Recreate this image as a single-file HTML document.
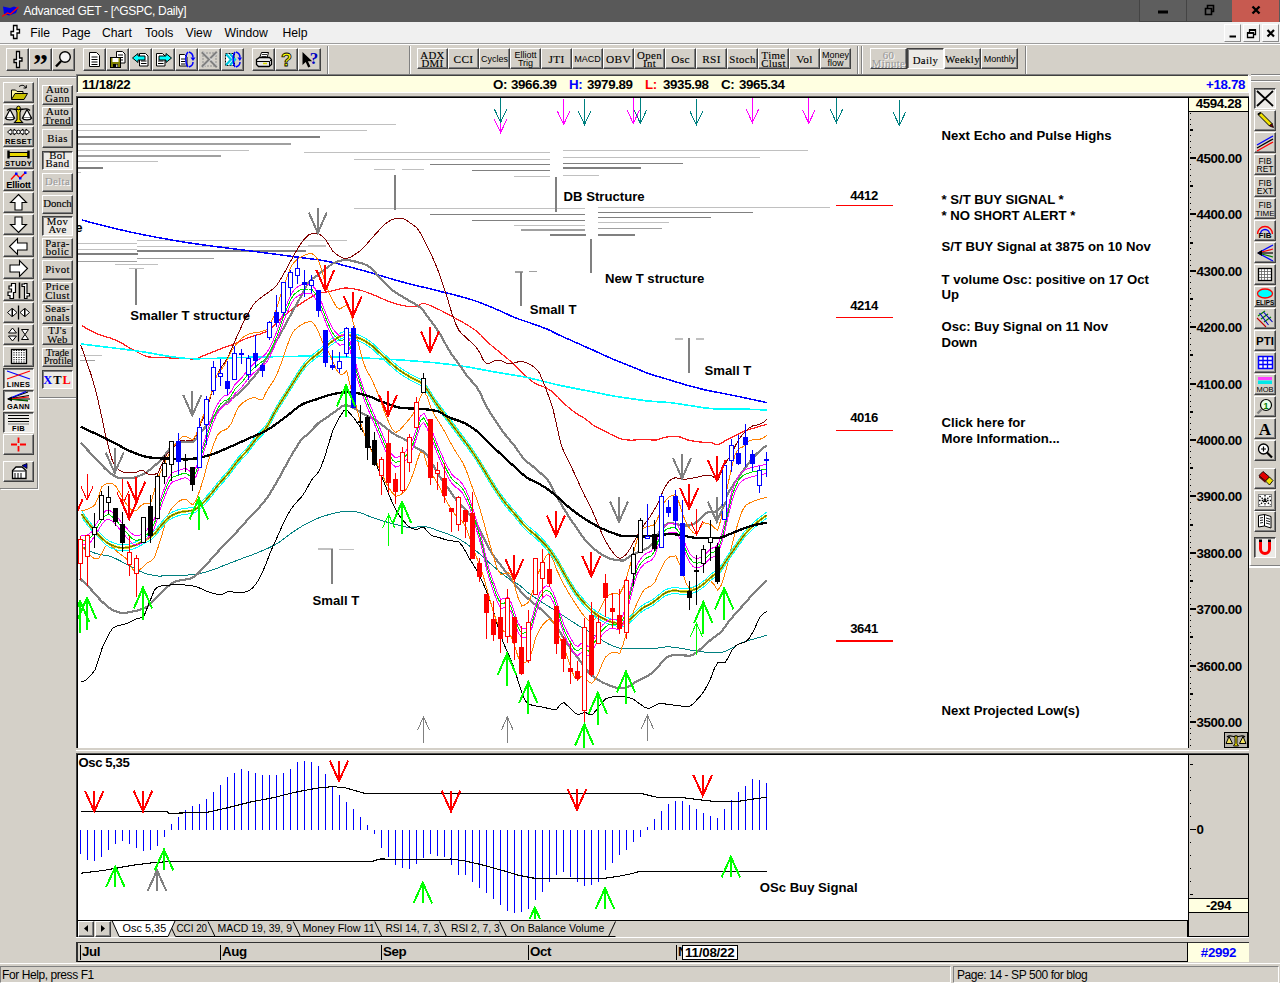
<!DOCTYPE html>
<html><head><meta charset="utf-8"><title>Advanced GET - [^GSPC, Daily]</title>
<style>

*{box-sizing:border-box;margin:0;padding:0}
html,body{width:1280px;height:983px;overflow:hidden;background:#d4d0c8}
body{position:relative;font-family:"Liberation Sans",Arial,sans-serif;font-size:12px;color:#000}
.abs{position:absolute}
.chartsvg{position:absolute;left:0;top:0;pointer-events:none}
#title{left:0;top:0;width:1280px;height:22.500px;background:#595959;color:#fff}
#title .t{position:absolute;left:23.5px;top:4px;font-size:12px;white-space:nowrap;letter-spacing:-0.3px}
.wb{position:absolute;top:0;height:22px;width:46px;background:#5e5e5e;border:1px solid #444;border-top:none}
#menu{left:0;top:22px;width:1280px;height:21px;background:#f0f0f0}
#menu span{position:absolute;top:3.5px;font-size:12.2px}
.mdi{position:absolute;top:24px;width:17.500px;height:17.500px;background:#f2f2f2;border:1px solid;border-color:#fff #8a8a8a #8a8a8a #fff}
#tbar{left:0;top:43px;width:1280px;height:33px;background:#d4d0c8;border-top:1px solid #9d9d9d;box-shadow:inset 0 1px 0 #fff}
.btn{position:absolute;background:#d4d0c8;border:1px solid;border-color:#fff #404040 #404040 #fff;box-shadow:inset -1px -1px 0 #808080;overflow:hidden}
.btn.p{border-color:#404040 #fff #fff #404040;box-shadow:inset 1px 1px 0 #808080;background:#eceae6}
.btn svg{position:absolute;left:0;top:0}
.lbl{position:absolute;left:0;right:0;text-align:center;font-family:"Liberation Serif","DejaVu Serif",serif;font-size:10.8px;line-height:8.5px;white-space:nowrap;letter-spacing:0.35px;-webkit-text-stroke:0.12px #000}
.lbl.s{font-family:"Liberation Sans",Arial,sans-serif;font-size:9px;letter-spacing:0;-webkit-text-stroke:0}
.dis{color:#9a9a9a;text-shadow:1px 1px 0 #fff;-webkit-text-stroke:0.1px #9a9a9a}
.vsep{position:absolute;width:2px;border-left:1px solid #808080;border-right:1px solid #fff}
.hsep{position:absolute;height:2px;border-top:1px solid #808080;border-bottom:1px solid #fff}
.sunk{position:absolute;border:1px solid;border-color:#808080 #fff #fff #808080;box-shadow:inset 1px 1px 0 #404040}
.yel{background:#ffffe1}
.b13{font-weight:bold;font-size:13.33px;white-space:nowrap;letter-spacing:-0.36px}
.axl{position:absolute;left:1196.500px;font-weight:bold;font-size:13.33px;line-height:14px;white-space:nowrap;letter-spacing:-0.4px}
.tick{position:absolute;left:1190px;height:1px;background:#000}
.tab{position:absolute;top:921px;height:15px;font-size:12px;line-height:14px;white-space:nowrap;color:#000}

</style></head>
<body>
<div id="title" class="abs"><svg class="abs" style="left:2px;top:4px" width="17" height="14" viewBox="0 0 17 14"><path d="M1 2.500l7 1.500 4-1.500 4 1.500-2 5-7 2.500-5-1.500z" fill="#0000e8"/><path d="M0 12.500l5.500-3.500 3 1 8-7" fill="none" stroke="#ff0000" stroke-width="1.300"/></svg><span class="t">Advanced GET - [^GSPC, Daily]</span><div class="wb" style="left:1139px;width:48px"><svg class="abs" style="left:0px;top:0px" width="46" height="20" viewBox="0 0 46 20"><rect x="18" y="10.500" width="10" height="3" fill="#000"/></svg></div><div class="wb" style="left:1186px;width:47px"><svg class="abs" style="left:0px;top:0px" width="45" height="20" viewBox="0 0 45 20"><path d="M18.500 8.500h6v6h-6zM20.500 8v-2.500h6v6h-2" fill="none" stroke="#000" stroke-width="1.600"/></svg></div><div class="wb" style="left:1232px;width:47px;background:#c75a50;border-color:#c75a50"><svg class="abs" style="left:0px;top:0px" width="45" height="20" viewBox="0 0 45 20"><path d="M19.500 6.500l7 7M26.500 6.500l-7 7" stroke="#000" stroke-width="2.400"/></svg></div></div>
<div id="menu" class="abs"><svg class="abs" style="left:9px;top:2px" width="12" height="16" viewBox="0 0 12 16"><path d="M4.5 1.5h3.5v4h2.5v3.5h-2.5v5.5h-3.500v-3.500h-2.500v-3.500h2.500z" fill="#fff" stroke="#000" stroke-width="1.3"/></svg><span style="left:30.3px">File</span><span style="left:62px">Page</span><span style="left:102px">Chart</span><span style="left:145px">Tools</span><span style="left:185.5px">View</span><span style="left:224.5px">Window</span><span style="left:282.5px">Help</span></div>
<div class="mdi" style="left:1223.500px"><svg class="abs" style="left:0px;top:0px" width="16" height="16" viewBox="0 0 16 16"><rect x="4.500" y="10.500" width="6.500" height="2" fill="#000"/></svg></div>
<div class="mdi" style="left:1242.500px"><svg class="abs" style="left:0px;top:0px" width="16" height="16" viewBox="0 0 16 16"><path d="M3.500 8h6v4.500h-6zM5.500 7.500v-2.500h6v4.500h-2" fill="none" stroke="#000" stroke-width="1.300"/><path d="M3 7.800h7M5 5h7" stroke="#000" stroke-width="1.800"/></svg></div>
<div class="mdi" style="left:1261.500px"><svg class="abs" style="left:0px;top:0px" width="16" height="16" viewBox="0 0 16 16"><path d="M4.500 5l6.500 6.500M11 5l-6.500 6.500" stroke="#000" stroke-width="2.200"/></svg></div>
<div id="tbar" class="abs"></div>
<div class="btn" style="left:6px;top:48px;width:23px;height:23px;"><svg class="abs" style="left:0px;top:0px" width="21" height="21" viewBox="0 0 21 21"><path d="M9.500 2.500h3v6.500h2.500v3h-2.500v6.500h-3v-5h-2.500v-3h2.500z" fill="#fff" stroke="#000" stroke-width="1.300"/></svg></div>
<div class="btn" style="left:29px;top:48px;width:23px;height:23px;"><svg class="abs" style="left:0px;top:0px" width="21" height="21" viewBox="0 0 21 21"><text x="10.5" y="25" font-size="30" fill="#000" font-weight="bold" text-anchor="middle" font-family="'Liberation Serif',serif" >”</text></svg></div>
<div class="btn" style="left:52px;top:48px;width:23px;height:23px;"><svg class="abs" style="left:0px;top:0px" width="21" height="21" viewBox="0 0 21 21"><circle cx="12" cy="8" r="5.300" fill="#f4f4f4" stroke="#000" stroke-width="1.4"/><path d="M8.200 12l-5.200 5.500" stroke="#000" stroke-width="2.400"/></svg></div>
<div class="btn" style="left:83px;top:48px;width:23px;height:23px;"><svg class="abs" style="left:0px;top:0px" width="21" height="21" viewBox="0 0 21 21"><path d="M5.500 3.500h7l3 3v11h-10z" fill="#fff" stroke="#000" stroke-width="1"/><path d="M7.500 8h6M7.500 10.500h6M7.500 13h6M7.500 15.500h6" stroke="#000" stroke-width="1"/></svg></div>
<div class="btn" style="left:106px;top:48px;width:23px;height:23px;"><svg class="abs" style="left:0px;top:0px" width="21" height="21" viewBox="0 0 21 21"><path d="M9.500 2.500h6l2.500 2.500v9h-8.500z" fill="#fff" stroke="#000" stroke-width="1"/><path d="M11 6h5M11 8.500h5M11 11h5" stroke="#000" stroke-width="1"/><rect x="3.500" y="8.500" width="10" height="10" fill="#808000" stroke="#000" stroke-width="1"/><rect x="5.500" y="9" width="6" height="4" fill="#fff"/><rect x="6" y="15" width="5" height="3.500" fill="#000"/><rect x="9" y="15.500" width="1.500" height="2.500" fill="#c0c0c0"/></svg></div>
<div class="btn" style="left:129px;top:48px;width:23px;height:23px;"><svg class="abs" style="left:0px;top:0px" width="21" height="21" viewBox="0 0 21 21"><path d="M9.500 4.500h6l2.500 2.500v10h-8.500z" fill="#fff" stroke="#000" stroke-width="1"/><path d="M11 12h5.500M11 14.500h5.500" stroke="#000" stroke-width="1"/><path d="M2.500 9l5.500-4.500v2.500h7v4h-7v2.500z" fill="#00ffff" stroke="#000" stroke-width="1"/></svg></div>
<div class="btn" style="left:152px;top:48px;width:23px;height:23px;"><svg class="abs" style="left:0px;top:0px" width="21" height="21" viewBox="0 0 21 21"><path d="M3.500 4.500h6l2.500 2.500v10h-8.500z" fill="#fff" stroke="#000" stroke-width="1"/><path d="M5 12h5.500M5 14.500h5.500" stroke="#000" stroke-width="1"/><path d="M18.500 9l-5.500-4.500v2.500h-7v4h7v2.500z" fill="#00ffff" stroke="#000" stroke-width="1"/></svg></div>
<div class="btn" style="left:175px;top:48px;width:23px;height:23px;"><svg class="abs" style="left:0px;top:0px" width="21" height="21" viewBox="0 0 21 21"><path d="M3.500 5.500h5l2.500 2.500v9h-7.500z" fill="#fff" stroke="#000" stroke-width="1"/><path d="M5 10h4.500M5 12.500h4.500M5 15h4.500" stroke="#000" stroke-width="1"/><path d="M12 3c-3 3-3 11.500 0 15M13 3c3 1 4 3 4 5.500M13 18c3-1 4-3 4-5" fill="none" stroke="#0000ff" stroke-width="1.500"/><path d="M14.500 8.500h5l-2.500 3.500z" fill="#0000ff"/></svg></div>
<div class="btn" style="left:198px;top:48px;width:23px;height:23px;"><svg class="abs" style="left:0px;top:0px" width="21" height="21" viewBox="0 0 21 21"><rect x="4" y="4" width="13" height="13" fill="none" stroke="#909090" stroke-width="1" stroke-dasharray="2 1"/><path d="M3 3l15 15M18 3l-15 15" stroke="#808080" stroke-width="2.600"/><path d="M4 2.500l15 15M19 3.500l-15 15" stroke="#fff" stroke-width="0.800"/></svg></div>
<div class="btn" style="left:221px;top:48px;width:23px;height:23px;"><svg class="abs" style="left:0px;top:0px" width="21" height="21" viewBox="0 0 21 21"><rect x="3.500" y="4.500" width="9" height="12" fill="#fff" stroke="#000" stroke-width="1" stroke-dasharray="2 1"/><path d="M4 5l5 5.500-5 5.500M8 5l5 5.500-5 5.500" fill="none" stroke="#00c8e0" stroke-width="2.200"/><path d="M13 3c-2.500 3-2.500 11.500 0 15M14 3c3 1 4 3 4 5.500M14 18c3-1 4-3 4-5" fill="none" stroke="#0000ff" stroke-width="1.500"/><path d="M15.500 8.500h4.500l-2.200 3.500z" fill="#0000ff"/></svg></div>
<div class="btn" style="left:252px;top:48px;width:23px;height:23px;"><svg class="abs" style="left:0px;top:0px" width="21" height="21" viewBox="0 0 21 21"><path d="M6.500 9l2-5.500h7l-1.500 5.500" fill="#fff" stroke="#000" stroke-width="1"/><path d="M9 5.500h5M8.500 7.500h5" stroke="#000" stroke-width="0.800"/><path d="M3.500 10.500l3-2h10l2 2v5l-2.500 2h-10.500l-2-2z" fill="#e8e8e8" stroke="#000" stroke-width="1.300"/><path d="M4 12.500h12.500l2-2M16.500 12.500v5" fill="none" stroke="#000" stroke-width="1"/><path d="M10 14.500h4" stroke="#d8d800" stroke-width="1.500"/></svg></div>
<div class="btn" style="left:275px;top:48px;width:23px;height:23px;"><svg class="abs" style="left:0px;top:0px" width="21" height="21" viewBox="0 0 21 21"><text x="10.5" y="17" font-size="18" fill="#ffff00" font-weight="bold" text-anchor="middle" font-family="'Liberation Sans',Arial,sans-serif" stroke="#000" stroke-width="0.800">?</text></svg></div>
<div class="btn" style="left:298px;top:48px;width:23px;height:23px;"><svg class="abs" style="left:0px;top:0px" width="21" height="21" viewBox="0 0 21 21"><path d="M3.500 3v13l3.200-3 2.500 5.500 2.200-1-2.500-5.300h4.300z" fill="#000"/><text x="15" y="14.5" font-size="17" fill="#0000c0" font-weight="bold" text-anchor="middle" font-family="'Liberation Serif',serif" >?</text></svg></div>
<div class="vsep" style="left:327px;top:46px;height:28px"></div>
<div class="vsep" style="left:409px;top:46px;height:28px"></div>
<div class="btn" style="left:417px;top:48px;width:31px;height:21px;"><div class="lbl " style="top:1.5px">ADX<br>DMI</div></div>
<div class="btn" style="left:448px;top:48px;width:31px;height:21px;"><div class="lbl " style="font-size:11.3px;top:5.5px">CCI</div></div>
<div class="btn" style="left:479px;top:48px;width:31px;height:21px;"><div class="lbl s" style="top:5.5px">Cycles</div></div>
<div class="btn" style="left:510px;top:48px;width:31px;height:21px;"><div class="lbl s" style="top:1.5px">Elliott<br>Trig</div></div>
<div class="btn" style="left:541px;top:48px;width:31px;height:21px;"><div class="lbl " style="font-size:11.3px;top:5.5px">JTI</div></div>
<div class="btn" style="left:572px;top:48px;width:31px;height:21px;"><div class="lbl s" style="top:5.5px">MACD</div></div>
<div class="btn" style="left:603px;top:48px;width:31px;height:21px;"><div class="lbl " style="font-size:11.3px;top:5.5px">OBV</div></div>
<div class="btn" style="left:634px;top:48px;width:31px;height:21px;"><div class="lbl " style="top:1.5px">Open<br>Int</div></div>
<div class="btn" style="left:665px;top:48px;width:31px;height:21px;"><div class="lbl " style="font-size:11.3px;top:5.5px">Osc</div></div>
<div class="btn" style="left:696px;top:48px;width:31px;height:21px;"><div class="lbl " style="font-size:11.3px;top:5.5px">RSI</div></div>
<div class="btn" style="left:727px;top:48px;width:31px;height:21px;"><div class="lbl " style="top:5.5px">Stoch</div></div>
<div class="btn" style="left:758px;top:48px;width:31px;height:21px;"><div class="lbl " style="top:1.5px">Time<br>Clust</div></div>
<div class="btn" style="left:789px;top:48px;width:31px;height:21px;"><div class="lbl " style="font-size:11.3px;top:5.5px">Vol</div></div>
<div class="btn" style="left:820px;top:48px;width:31px;height:21px;"><div class="lbl s" style="top:1.5px">Money<br>flow</div></div>
<div class="vsep" style="left:857px;top:46px;height:28px"></div>
<div class="vsep" style="left:861px;top:46px;height:28px"></div>
<div class="btn" style="left:870px;top:48px;width:37px;height:21px;"><div class="lbl dis" style="top:1.5px">60<br>Minute</div></div>
<div class="btn p" style="left:907px;top:48px;width:37px;height:21px;"><div class="lbl " style="top:6.5px">Daily</div></div>
<div class="btn" style="left:944px;top:48px;width:37px;height:21px;"><div class="lbl " style="top:5.5px">Weekly</div></div>
<div class="btn" style="left:981px;top:48px;width:37px;height:21px;"><div class="lbl s" style="top:5.5px">Monthly</div></div>
<div class="vsep" style="left:1025px;top:46px;height:28px"></div>
<div class="abs" style="left:0;top:76px;width:38px;height:413px;border-right:1px solid #808080;border-bottom:1px solid #808080;box-shadow:1px 1px 0 #fff"></div>
<div class="abs" style="left:39px;top:76px;width:37px;height:322px;border-bottom:1px solid #808080;box-shadow:0 1px 0 #fff"></div>
<div class="hsep" style="left:0;top:76px;width:76px"></div>
<div class="btn" style="left:3px;top:82px;width:31px;height:21px;"><svg class="abs" style="left:0px;top:0px" width="29" height="19" viewBox="0 0 29 19"><path d="M7.500 16.500v-9.500h4l1.500 1.500h6v2" fill="#fff8a0" stroke="#000" stroke-width="1"/><path d="M7.500 16.500l3.500-6h12.500l-3.500 6z" fill="#c8c000" stroke="#000" stroke-width="1"/><path d="M15 3.500c3-2 5.500-1.500 7 1.500m-2.500 0h2.800v-2.800" fill="none" stroke="#000" stroke-width="1"/></svg></div>
<div class="btn" style="left:3px;top:104px;width:31px;height:21px;"><svg class="abs" style="left:0px;top:0px" width="29" height="19" viewBox="0 0 29 19"><path d="M3 5.500c3-4 8 0.500 11.500-2c3.500 2.500 8.500-2 11.500 2" fill="none" stroke="#000" stroke-width="1.300"/><path d="M6 4.500l-4.500 8.500h9zM23 4.500l-4.500 8.500h9z" fill="#fff" stroke="#000" stroke-width="1.200"/><path d="M1.500 13c1 2.500 8 2.500 9 0M18.500 13c1 2.500 8 2.500 9 0" fill="#fff" stroke="#000" stroke-width="1.200"/><path d="M12 4.500h5l-1 3v7l2.500 3h-8l2.500-3v-7z" fill="#e8d800" stroke="#000" stroke-width="1.100"/><circle cx="14.500" cy="3" r="1.800" fill="#e8d800" stroke="#000" stroke-width="1"/></svg></div>
<div class="btn" style="left:3px;top:126px;width:31px;height:21px;"><svg class="abs" style="left:0px;top:0px" width="29" height="19" viewBox="0 0 29 19"><path d="M3.500 5l3.500-3v2h3v-2l3.500 3-3.500 3v-2h-3v2zM15.500 5l3.500-3v2h3v-2l3.500 3-3.500 3v-2h-3v2z" fill="#fff" stroke="#000" stroke-width="1"/><circle cx="14.500" cy="5" r="1.800" fill="#fff" stroke="#000" stroke-width="1"/><text x="14.5" y="16.5" font-size="7.6" fill="#000" font-weight="bold" text-anchor="middle" font-family="'Liberation Sans',Arial,sans-serif" letter-spacing="0.3">RESET</text></svg></div>
<div class="btn" style="left:3px;top:148px;width:31px;height:21px;"><svg class="abs" style="left:0px;top:0px" width="29" height="19" viewBox="0 0 29 19"><rect x="5" y="3.500" width="19" height="4" fill="#e8d800" stroke="#000" stroke-width="1"/><path d="M4.500 1.500v8M24.500 1.500v8" stroke="#000" stroke-width="2.400"/><text x="14.5" y="17" font-size="7.6" fill="#000" font-weight="bold" text-anchor="middle" font-family="'Liberation Sans',Arial,sans-serif" letter-spacing="0.3">STUDY</text></svg></div>
<div class="btn" style="left:3px;top:170px;width:31px;height:21px;"><svg class="abs" style="left:0px;top:0px" width="29" height="19" viewBox="0 0 29 19"><path d="M7 8.500l5-5.500 4 4 5-5" fill="none" stroke="#ff0000" stroke-width="1.300"/><rect x="11" y="1.500" width="2.500" height="2.500" fill="#0000ff"/><rect x="20" y="0.500" width="2.500" height="2.500" fill="#0000ff"/><rect x="15" y="6" width="2.500" height="2.500" fill="#0000ff"/><text x="14.5" y="17" font-size="9.3" fill="#000" font-weight="bold" text-anchor="middle" font-family="'Liberation Sans',Arial,sans-serif" letter-spacing="-0.2">Elliott</text></svg></div>
<div class="btn" style="left:3px;top:192px;width:31px;height:21px;"><svg class="abs" style="left:0px;top:0px" width="29" height="19" viewBox="0 0 29 19"><path d="M14.500 1.500l8 8h-4.500v7.500h-7v-7.500h-4.500z" fill="#fff" stroke="#000" stroke-width="1.100"/></svg></div>
<div class="btn" style="left:3px;top:214px;width:31px;height:21px;"><svg class="abs" style="left:0px;top:0px" width="29" height="19" viewBox="0 0 29 19"><path d="M14.500 17.500l8-8h-4.500v-7.500h-7v7.500h-4.500z" fill="#fff" stroke="#000" stroke-width="1.100"/></svg></div>
<div class="btn" style="left:3px;top:236px;width:31px;height:21px;"><svg class="abs" style="left:0px;top:0px" width="29" height="19" viewBox="0 0 29 19"><path d="M5.500 9.500l8-8v4.500h9.500v7h-9.500v4.500z" fill="#fff" stroke="#000" stroke-width="1.100"/></svg></div>
<div class="btn" style="left:3px;top:258px;width:31px;height:21px;"><svg class="abs" style="left:0px;top:0px" width="29" height="19" viewBox="0 0 29 19"><path d="M23.500 9.500l-8-8v4.500h-9.500v7h9.500v4.500z" fill="#fff" stroke="#000" stroke-width="1.100"/></svg></div>
<div class="btn" style="left:3px;top:280px;width:31px;height:21px;"><svg class="abs" style="left:0px;top:0px" width="29" height="19" viewBox="0 0 29 19"><path d="M7.500 2.500h4v9h-2v6h-3.500v-3h-2v-3.500h3.500v-3h-2.500v-3h2.500zM20.500 2.500h2.500v10h2.500v2.500h-2.500v2.500h-2.500v-12h-2.500v-2.500h2.500z" fill="#fff" stroke="#000" stroke-width="1.200"/><path d="M15.500 1.500v16" stroke="#000" stroke-width="1.600"/></svg></div>
<div class="btn" style="left:3px;top:302px;width:31px;height:21px;"><svg class="abs" style="left:0px;top:0px" width="29" height="19" viewBox="0 0 29 19"><path d="M3.500 9.500l4.500-4v8zM13 9.500l-4.500-4v8zM16 9.500l4.500-4v8zM25.500 9.500l-4.500-4v8z" fill="#fff" stroke="#000" stroke-width="1"/><path d="M14.500 2.500v14" stroke="#000" stroke-width="1.300"/></svg></div>
<div class="btn" style="left:3px;top:324px;width:31px;height:21px;"><svg class="abs" style="left:0px;top:0px" width="29" height="19" viewBox="0 0 29 19"><path d="M8.500 3l4 5h-8zM8.500 16l4-5h-8z" fill="#fff" stroke="#000" stroke-width="1"/><path d="M17.500 4.500h7l-3.500 5 3.500 5h-7l3.500-5z" fill="#fff" stroke="#000" stroke-width="1"/><path d="M14.500 2.500v14" stroke="#000" stroke-width="1.300"/></svg></div>
<div class="btn" style="left:3px;top:346px;width:31px;height:21px;"><svg class="abs" style="left:0px;top:0px" width="29" height="19" viewBox="0 0 29 19"><rect x="7.500" y="2.500" width="15" height="14" fill="#fff" stroke="#000" stroke-width="1.300"/><path d="M10 3v13M12.500 3v13M15 3v13M17.500 3v13M20 3v13" stroke="#000" stroke-width="1.200" stroke-dasharray="1 1.300"/></svg></div>
<div class="btn p" style="left:3px;top:368px;width:31px;height:21px;"><svg class="abs" style="left:0px;top:0px" width="29" height="19" viewBox="0 0 29 19"><path d="M3 2l23 8" stroke="#0000ff" stroke-width="1.200"/><path d="M3 10l23-8" stroke="#ff0000" stroke-width="1.200"/><text x="14.5" y="17.5" font-size="7.4" fill="#000" font-weight="bold" text-anchor="middle" font-family="'Liberation Sans',Arial,sans-serif" letter-spacing="0.3">LINES</text></svg></div>
<div class="btn p" style="left:3px;top:390px;width:31px;height:21px;"><svg class="abs" style="left:0px;top:0px" width="29" height="19" viewBox="0 0 29 19"><path d="M4 8l20-7M4 8l21-3.500M4 8h22M4 8l20 2" fill="none" stroke-width="1.100" stroke="#000"/><path d="M4 8l18-7.500" stroke="#0000ff" stroke-width="1.200"/><path d="M4 8l21-2" stroke="#ff0000" stroke-width="1.200"/><path d="M4 8l20 1.500" stroke="#008000" stroke-width="1.200"/><path d="M3 8l5-2.500v5z" fill="#000"/><text x="14.5" y="17.5" font-size="7.4" fill="#000" font-weight="bold" text-anchor="middle" font-family="'Liberation Sans',Arial,sans-serif" letter-spacing="0.3">GANN</text></svg></div>
<div class="btn p" style="left:3px;top:412px;width:31px;height:21px;"><svg class="abs" style="left:0px;top:0px" width="29" height="19" viewBox="0 0 29 19"><path d="M4 2.500h21M4 5.500h21M4 8.500h21" stroke="#000" stroke-width="1.100"/><path d="M4 11h21" stroke="#808080" stroke-width="1"/><text x="14.5" y="18" font-size="7.5" fill="#000" font-weight="bold" text-anchor="middle" font-family="'Liberation Sans',Arial,sans-serif" letter-spacing="0.3">FIB</text></svg></div>
<div class="btn" style="left:3px;top:434px;width:31px;height:21px;"><svg class="abs" style="left:0px;top:0px" width="29" height="19" viewBox="0 0 29 19"><path d="M14.500 2.500v5.500M14.500 11v5.500M7 9.500h6M16 9.500h6" stroke="#ff0000" stroke-width="1.800"/></svg></div>
<div class="btn" style="left:3px;top:461px;width:31px;height:21px;"><svg class="abs" style="left:0px;top:0px" width="29" height="19" viewBox="0 0 29 19"><path d="M8.500 16.500v-8l3.500-3.500h6l4 3.500v8z" fill="#fff" stroke="#000" stroke-width="1.300"/><path d="M11 16v-5M14 16v-5M17 16v-5" stroke="#000" stroke-width="1"/><path d="M18 3.500l5-2v5z" fill="#0000c0" stroke="#000" stroke-width="0.800"/><path d="M8.500 9h13" stroke="#000" stroke-width="1"/></svg></div>
<div class="btn" style="left:42px;top:85px;width:31px;height:19.5px;"><div class="lbl " style="top:-0.8px">Auto<br>Gann</div></div>
<div class="btn" style="left:42px;top:106.9px;width:31px;height:19.5px;"><div class="lbl " style="top:-0.8px">Auto<br>Trend</div></div>
<div class="btn" style="left:42px;top:128.8px;width:31px;height:19.5px;"><div class="lbl " style="top:3.8px">Bias</div></div>
<div class="btn p" style="left:42px;top:150.7px;width:31px;height:19.5px;"><div class="lbl " style="top:-0.8px">Bol<br>Band</div></div>
<div class="btn" style="left:42px;top:172.6px;width:31px;height:19.5px;"><div class="lbl dis" style="top:3.8px">Delta</div></div>
<div class="btn" style="left:42px;top:194.5px;width:31px;height:19.5px;"><div class="lbl " style="letter-spacing:-0.1px;top:3.8px">Donch</div></div>
<div class="btn p" style="left:42px;top:216.4px;width:31px;height:19.5px;"><div class="lbl " style="top:-0.8px">Mov<br>Ave</div></div>
<div class="btn" style="left:42px;top:238.3px;width:31px;height:19.5px;"><div class="lbl " style="top:-0.8px">Para-<br>bolic</div></div>
<div class="btn" style="left:42px;top:260.2px;width:31px;height:19.5px;"><div class="lbl " style="top:3.8px">Pivot</div></div>
<div class="btn" style="left:42px;top:282.1px;width:31px;height:19.5px;"><div class="lbl " style="top:-0.8px">Price<br>Clust</div></div>
<div class="btn" style="left:42px;top:304px;width:31px;height:19.5px;"><div class="lbl " style="top:-0.8px">Seas-<br>onals</div></div>
<div class="btn" style="left:42px;top:325.9px;width:31px;height:19.5px;"><div class="lbl " style="top:-0.8px">TJ's<br>Web</div></div>
<div class="btn" style="left:42px;top:347.8px;width:31px;height:19.5px;"><div class="lbl " style="letter-spacing:-0.1px;font-size:10.300px;top:0.2px">Trade<br>Profile</div></div>
<div class="btn p" style="left:42px;top:369.7px;width:31px;height:19.5px;"><div class="lbl" style="top:5px;font-size:12.500px;letter-spacing:1px;font-weight:bold;-webkit-text-stroke:0"><span style="color:#00f">X</span>T<span style="color:#f00">L</span></div></div>
<div class="sunk yel" style="left:76px;top:74px;width:1173px;height:19px"></div>
<div class="abs b13" style="left:82px;top:76.5px">11/18/22</div>
<div class="abs b13" style="left:493px;top:76.5px">O:</div><div class="abs b13" style="left:511px;top:76.5px">3966.39</div>
<div class="abs b13" style="left:569px;top:76.5px;color:#00f">H:</div><div class="abs b13" style="left:587px;top:76.5px">3979.89</div>
<div class="abs b13" style="left:645px;top:76.5px;color:#f00">L:</div><div class="abs b13" style="left:663px;top:76.5px">3935.98</div>
<div class="abs b13" style="left:721px;top:76.5px">C:</div><div class="abs b13" style="left:739px;top:76.5px">3965.34</div>
<div class="abs b13" style="right:35px;top:76.5px;color:#00f">+18.78</div>
<div class="abs" style="left:76px;top:96px;width:1173px;height:652px;background:#000;border-left:1px solid #404040;border-top:1px solid #505050"></div>
<div class="abs" style="left:78px;top:98px;width:1110px;height:650px;background:#fff"></div>
<div class="abs" style="left:1189px;top:98px;width:59px;height:650px;background:#d4d0c8"></div>
<div class="abs" style="left:76px;top:750px;width:1173px;height:1px;background:#fff"></div>
<div class="abs" style="left:76px;top:753px;width:1173px;height:168px;background:#000;border-left:1px solid #404040;border-top:1px solid #505050"></div>
<div class="abs" style="left:78px;top:755px;width:1110px;height:165px;background:#fff"></div>
<div class="abs" style="left:1189px;top:755px;width:59px;height:181px;background:#d4d0c8"></div>
<div class="abs" style="left:76px;top:921px;width:2px;height:16px;background:#000;border-left:1px solid #404040"></div>
<div class="abs" style="left:1187px;top:920px;width:2px;height:17px;background:#000"></div>
<div class="abs" style="left:1187px;top:936px;width:62px;height:1px;background:#000"></div>
<div class="abs" style="left:1248px;top:920px;width:1px;height:17px;background:#000"></div>
<div class="abs" style="left:76px;top:937px;width:1173px;height:1px;background:#fff"></div>
<div class="abs yel b13" style="left:1189px;top:98px;width:59px;height:14px;border-bottom:1px solid #000;text-align:center;line-height:12.500px">4594.28</div>
<div class="tick" style="top:745px;width:1px;height:1px"></div>
<div class="tick" style="top:739px;width:1px;height:1px"></div>
<div class="tick" style="top:733px;width:1px;height:1px"></div>
<div class="tick" style="top:728px;width:1px;height:1px"></div>
<div class="tick" style="top:721px;width:6px;height:2px"></div>
<div class="axl" style="top:715.5px">3500.00</div>
<div class="tick" style="top:716px;width:1px;height:1px"></div>
<div class="tick" style="top:711px;width:1px;height:1px"></div>
<div class="tick" style="top:705px;width:1px;height:1px"></div>
<div class="tick" style="top:699px;width:1px;height:1px"></div>
<div class="tick" style="top:693px;width:3px;height:2px"></div>
<div class="tick" style="top:688px;width:1px;height:1px"></div>
<div class="tick" style="top:683px;width:1px;height:1px"></div>
<div class="tick" style="top:677px;width:1px;height:1px"></div>
<div class="tick" style="top:671px;width:1px;height:1px"></div>
<div class="tick" style="top:665px;width:6px;height:2px"></div>
<div class="axl" style="top:659.5px">3600.00</div>
<div class="tick" style="top:660px;width:1px;height:1px"></div>
<div class="tick" style="top:654px;width:1px;height:1px"></div>
<div class="tick" style="top:649px;width:1px;height:1px"></div>
<div class="tick" style="top:643px;width:1px;height:1px"></div>
<div class="tick" style="top:636px;width:3px;height:2px"></div>
<div class="tick" style="top:632px;width:1px;height:1px"></div>
<div class="tick" style="top:626px;width:1px;height:1px"></div>
<div class="tick" style="top:620px;width:1px;height:1px"></div>
<div class="tick" style="top:615px;width:1px;height:1px"></div>
<div class="tick" style="top:608px;width:6px;height:2px"></div>
<div class="axl" style="top:602.5px">3700.00</div>
<div class="tick" style="top:604px;width:1px;height:1px"></div>
<div class="tick" style="top:598px;width:1px;height:1px"></div>
<div class="tick" style="top:592px;width:1px;height:1px"></div>
<div class="tick" style="top:587px;width:1px;height:1px"></div>
<div class="tick" style="top:580px;width:3px;height:2px"></div>
<div class="tick" style="top:575px;width:1px;height:1px"></div>
<div class="tick" style="top:570px;width:1px;height:1px"></div>
<div class="tick" style="top:564px;width:1px;height:1px"></div>
<div class="tick" style="top:558px;width:1px;height:1px"></div>
<div class="tick" style="top:552px;width:6px;height:2px"></div>
<div class="axl" style="top:546.5px">3800.00</div>
<div class="tick" style="top:547px;width:1px;height:1px"></div>
<div class="tick" style="top:542px;width:1px;height:1px"></div>
<div class="tick" style="top:536px;width:1px;height:1px"></div>
<div class="tick" style="top:530px;width:1px;height:1px"></div>
<div class="tick" style="top:524px;width:3px;height:2px"></div>
<div class="tick" style="top:519px;width:1px;height:1px"></div>
<div class="tick" style="top:513px;width:1px;height:1px"></div>
<div class="tick" style="top:508px;width:1px;height:1px"></div>
<div class="tick" style="top:502px;width:1px;height:1px"></div>
<div class="tick" style="top:495px;width:6px;height:2px"></div>
<div class="axl" style="top:489.5px">3900.00</div>
<div class="tick" style="top:491px;width:1px;height:1px"></div>
<div class="tick" style="top:485px;width:1px;height:1px"></div>
<div class="tick" style="top:479px;width:1px;height:1px"></div>
<div class="tick" style="top:474px;width:1px;height:1px"></div>
<div class="tick" style="top:467px;width:3px;height:2px"></div>
<div class="tick" style="top:463px;width:1px;height:1px"></div>
<div class="tick" style="top:457px;width:1px;height:1px"></div>
<div class="tick" style="top:451px;width:1px;height:1px"></div>
<div class="tick" style="top:446px;width:1px;height:1px"></div>
<div class="tick" style="top:439px;width:6px;height:2px"></div>
<div class="axl" style="top:433.5px">4000.00</div>
<div class="tick" style="top:434px;width:1px;height:1px"></div>
<div class="tick" style="top:429px;width:1px;height:1px"></div>
<div class="tick" style="top:423px;width:1px;height:1px"></div>
<div class="tick" style="top:417px;width:1px;height:1px"></div>
<div class="tick" style="top:411px;width:3px;height:2px"></div>
<div class="tick" style="top:406px;width:1px;height:1px"></div>
<div class="tick" style="top:401px;width:1px;height:1px"></div>
<div class="tick" style="top:395px;width:1px;height:1px"></div>
<div class="tick" style="top:389px;width:1px;height:1px"></div>
<div class="tick" style="top:383px;width:6px;height:2px"></div>
<div class="axl" style="top:377.5px">4100.00</div>
<div class="tick" style="top:378px;width:1px;height:1px"></div>
<div class="tick" style="top:372px;width:1px;height:1px"></div>
<div class="tick" style="top:367px;width:1px;height:1px"></div>
<div class="tick" style="top:361px;width:1px;height:1px"></div>
<div class="tick" style="top:354px;width:3px;height:2px"></div>
<div class="tick" style="top:350px;width:1px;height:1px"></div>
<div class="tick" style="top:344px;width:1px;height:1px"></div>
<div class="tick" style="top:338px;width:1px;height:1px"></div>
<div class="tick" style="top:333px;width:1px;height:1px"></div>
<div class="tick" style="top:326px;width:6px;height:2px"></div>
<div class="axl" style="top:320.5px">4200.00</div>
<div class="tick" style="top:322px;width:1px;height:1px"></div>
<div class="tick" style="top:316px;width:1px;height:1px"></div>
<div class="tick" style="top:310px;width:1px;height:1px"></div>
<div class="tick" style="top:305px;width:1px;height:1px"></div>
<div class="tick" style="top:298px;width:3px;height:2px"></div>
<div class="tick" style="top:293px;width:1px;height:1px"></div>
<div class="tick" style="top:288px;width:1px;height:1px"></div>
<div class="tick" style="top:282px;width:1px;height:1px"></div>
<div class="tick" style="top:276px;width:1px;height:1px"></div>
<div class="tick" style="top:270px;width:6px;height:2px"></div>
<div class="axl" style="top:264.5px">4300.00</div>
<div class="tick" style="top:265px;width:1px;height:1px"></div>
<div class="tick" style="top:260px;width:1px;height:1px"></div>
<div class="tick" style="top:254px;width:1px;height:1px"></div>
<div class="tick" style="top:248px;width:1px;height:1px"></div>
<div class="tick" style="top:242px;width:3px;height:2px"></div>
<div class="tick" style="top:237px;width:1px;height:1px"></div>
<div class="tick" style="top:231px;width:1px;height:1px"></div>
<div class="tick" style="top:226px;width:1px;height:1px"></div>
<div class="tick" style="top:220px;width:1px;height:1px"></div>
<div class="tick" style="top:213px;width:6px;height:2px"></div>
<div class="axl" style="top:207.5px">4400.00</div>
<div class="tick" style="top:209px;width:1px;height:1px"></div>
<div class="tick" style="top:203px;width:1px;height:1px"></div>
<div class="tick" style="top:197px;width:1px;height:1px"></div>
<div class="tick" style="top:192px;width:1px;height:1px"></div>
<div class="tick" style="top:185px;width:3px;height:2px"></div>
<div class="tick" style="top:181px;width:1px;height:1px"></div>
<div class="tick" style="top:175px;width:1px;height:1px"></div>
<div class="tick" style="top:169px;width:1px;height:1px"></div>
<div class="tick" style="top:164px;width:1px;height:1px"></div>
<div class="tick" style="top:157px;width:6px;height:2px"></div>
<div class="axl" style="top:151.5px">4500.00</div>
<div class="tick" style="top:152px;width:1px;height:1px"></div>
<div class="tick" style="top:147px;width:1px;height:1px"></div>
<div class="tick" style="top:141px;width:1px;height:1px"></div>
<div class="tick" style="top:135px;width:1px;height:1px"></div>
<div class="tick" style="top:129px;width:3px;height:2px"></div>
<div class="tick" style="top:124px;width:1px;height:1px"></div>
<div class="tick" style="top:119px;width:1px;height:1px"></div>
<div class="tick" style="top:113px;width:1px;height:1px"></div>
<svg class="abs" style="left:1224px;top:732px" width="24" height="16" viewBox="0 0 24 16"><rect x="0.500" y="0.500" width="23" height="15" fill="#b8b4ac" stroke="#000" stroke-width="1"/><path d="M3 5c3-3 7 1 9-1c2 2 6-2 9 1" fill="none" stroke="#000" stroke-width="1.200"/><path d="M5 4.500l-3 7h6.500zM19 4.500l-3.500 7h6.500z" fill="#f0e060" stroke="#000" stroke-width="1"/><path d="M10.500 4h3l-0.500 2.500v5l1.500 2.500h-5l1.500-2.500v-5z" fill="#e8d800" stroke="#000" stroke-width="0.900"/></svg>
<div class="tick" style="top:764px;width:3px"></div>
<div class="tick" style="top:777px;width:1px"></div>
<div class="tick" style="top:790px;width:1px"></div>
<div class="tick" style="top:803px;width:1px"></div>
<div class="tick" style="top:816px;width:1px"></div>
<div class="tick" style="top:829px;width:6px"></div>
<div class="tick" style="top:842px;width:1px"></div>
<div class="tick" style="top:855px;width:1px"></div>
<div class="tick" style="top:868px;width:1px"></div>
<div class="tick" style="top:881px;width:1px"></div>
<div class="tick" style="top:894px;width:3px"></div>
<div class="axl" style="top:822.5px">0</div>
<div class="abs yel b13" style="left:1189px;top:898px;width:59px;height:15px;border-top:1px solid #000;border-bottom:1px solid #000;text-align:center;line-height:13px">-294</div>
<div class="btn" style="left:78px;top:921px;width:16px;height:15.5px;"><svg class="abs" style="left:0px;top:0px" width="14" height="13" viewBox="0 0 14 13"><path d="M9 3v7l-4-3.5z" fill="#000"/></svg></div>
<div class="btn" style="left:95px;top:921px;width:16px;height:15.5px;"><svg class="abs" style="left:0px;top:0px" width="14" height="13" viewBox="0 0 14 13"><path d="M5 3v7l4-3.5z" fill="#000"/></svg></div>
<svg class="abs" style="left:111px;top:920.5px" width="520" height="17" viewBox="0 0 520 17"><path d="M57.5 0.5L64.5 15.5H104" fill="none" stroke="#000" stroke-width="1"/><path d="M97 0.5L104 15.5H189.3" fill="none" stroke="#000" stroke-width="1"/><path d="M182.3 0.5L189.3 15.5H270.8" fill="none" stroke="#000" stroke-width="1"/><path d="M263.8 0.5L270.8 15.5H335.5" fill="none" stroke="#000" stroke-width="1"/><path d="M328.5 0.5L335.5 15.5H395.5" fill="none" stroke="#000" stroke-width="1"/><path d="M388.5 0.5L395.5 15.5H504.5" fill="none" stroke="#000" stroke-width="1"/><path d="M497.5 15.500L504.5 0.500" fill="none" stroke="#000" stroke-width="1"/><path d="M1.2 0L8.2 15.500H57L64 0z" fill="#fff" stroke="none"/><path d="M1.2 0L8.2 15.500H57L64 0" fill="none" stroke="#000" stroke-width="1"/><text x="11.6" y="11.300" font-size="11" textLength="43.6" lengthAdjust="spacingAndGlyphs" font-family="'Liberation Sans',Arial,sans-serif" fill="#000">Osc 5,35</text><text x="65.5" y="11.300" font-size="11" textLength="30.6" lengthAdjust="spacingAndGlyphs" font-family="'Liberation Sans',Arial,sans-serif" fill="#000">CCI 20</text><text x="106.5" y="11.300" font-size="11" textLength="74.5" lengthAdjust="spacingAndGlyphs" font-family="'Liberation Sans',Arial,sans-serif" fill="#000">MACD 19, 39, 9</text><text x="191.4" y="11.300" font-size="11" textLength="72.3" lengthAdjust="spacingAndGlyphs" font-family="'Liberation Sans',Arial,sans-serif" fill="#000">Money Flow 11</text><text x="274.4" y="11.300" font-size="11" textLength="54" lengthAdjust="spacingAndGlyphs" font-family="'Liberation Sans',Arial,sans-serif" fill="#000">RSI 14, 7, 3</text><text x="340" y="11.300" font-size="11" textLength="48.7" lengthAdjust="spacingAndGlyphs" font-family="'Liberation Sans',Arial,sans-serif" fill="#000">RSI 2, 7, 3</text><text x="399.6" y="11.300" font-size="11" textLength="93.7" lengthAdjust="spacingAndGlyphs" font-family="'Liberation Sans',Arial,sans-serif" fill="#000">On Balance Volume</text></svg>
<div class="abs" style="left:76px;top:941.500px;width:1112px;height:20.500px;background:#d4d0c8;border:1px solid;border-color:#303030 #000 #000 #303030;border-left-width:2px"></div>
<div class="abs" style="left:80px;top:945px;width:1px;height:15px;background:#000"></div><div class="abs b13" style="left:82px;top:944px">Jul</div>
<div class="abs" style="left:220px;top:945px;width:1px;height:15px;background:#000"></div><div class="abs b13" style="left:222px;top:944px">Aug</div>
<div class="abs" style="left:381px;top:945px;width:1px;height:15px;background:#000"></div><div class="abs b13" style="left:383px;top:944px">Sep</div>
<div class="abs" style="left:528px;top:945px;width:1px;height:15px;background:#000"></div><div class="abs b13" style="left:530px;top:944px">Oct</div>
<div class="abs" style="left:676px;top:945px;width:1px;height:15px;background:#000"></div><div class="abs b13" style="left:678px;top:944px">N</div>
<div class="abs b13" style="left:682px;top:945px;width:56px;height:15px;background:#fff;border:1px solid #000;line-height:13px;padding-left:2px;letter-spacing:-0.2px">11/08/22</div>
<div class="abs yel b13" style="left:1188px;top:941.500px;width:61px;height:20.500px;text-align:center;line-height:19px;color:#00f;border-top:1px solid #303030">#2992</div>
<div class="abs" style="left:1249px;top:76px;width:31px;height:490px;border-left:2px solid #fff;border-bottom:1px solid #808080;box-shadow:0 2px 0 -0px #fff"></div>
<div class="hsep" style="left:1251px;top:74px;width:29px"></div><div class="hsep" style="left:1251px;top:80px;width:29px"></div>
<div class="btn p" style="left:1254px;top:88px;width:22px;height:21px;"><svg class="abs" style="left:0px;top:0px" width="20" height="19" viewBox="0 0 20 19"><path d="M2 2l16 15M18 2l-16 15" stroke="#000" stroke-width="1.800"/></svg></div>
<div class="btn" style="left:1254px;top:110px;width:22px;height:21px;"><svg class="abs" style="left:0px;top:0px" width="20" height="19" viewBox="0 0 20 19"><path d="M3 3l3-1.500 11 11-2.500 2.500-11-11z" fill="#f0e000" stroke="#000" stroke-width="1"/><path d="M14.500 15l2.500-2.500 1.500 4z" fill="#800000" stroke="#000" stroke-width="0.800"/><path d="M3 3.500l2.500-1.500" stroke="#000" stroke-width="2"/></svg></div>
<div class="btn" style="left:1254px;top:132px;width:22px;height:21px;"><svg class="abs" style="left:0px;top:0px" width="20" height="19" viewBox="0 0 20 19"><path d="M2 12l16-9" stroke="#0000ff" stroke-width="1.300"/><path d="M2 15l16-9" stroke="#000" stroke-width="1.300"/><path d="M2 18l16-9" stroke="#ff0000" stroke-width="1.300"/></svg></div>
<div class="btn" style="left:1254px;top:154px;width:22px;height:21px;"><svg class="abs" style="left:0px;top:0px" width="20" height="19" viewBox="0 0 20 19"><text x="10" y="8.5" font-size="8.5" fill="#000" font-weight="normal" text-anchor="middle" font-family="'Liberation Sans',Arial,sans-serif" >FIB</text><text x="10" y="16.5" font-size="8.5" fill="#000" font-weight="normal" text-anchor="middle" font-family="'Liberation Sans',Arial,sans-serif" >RET</text></svg></div>
<div class="btn" style="left:1254px;top:176px;width:22px;height:21px;"><svg class="abs" style="left:0px;top:0px" width="20" height="19" viewBox="0 0 20 19"><text x="10" y="8.5" font-size="8.5" fill="#000" font-weight="normal" text-anchor="middle" font-family="'Liberation Sans',Arial,sans-serif" >FIB</text><text x="10" y="16.5" font-size="8.5" fill="#000" font-weight="normal" text-anchor="middle" font-family="'Liberation Sans',Arial,sans-serif" >EXT</text></svg></div>
<div class="btn" style="left:1254px;top:198px;width:22px;height:21px;"><svg class="abs" style="left:0px;top:0px" width="20" height="19" viewBox="0 0 20 19"><text x="10" y="8.5" font-size="8.5" fill="#000" font-weight="normal" text-anchor="middle" font-family="'Liberation Sans',Arial,sans-serif" >FIB</text><text x="10" y="16.5" font-size="8" fill="#000" font-weight="normal" text-anchor="middle" font-family="'Liberation Sans',Arial,sans-serif" >TIME</text></svg></div>
<div class="btn" style="left:1254px;top:220px;width:22px;height:21px;"><svg class="abs" style="left:0px;top:0px" width="20" height="19" viewBox="0 0 20 19"><path d="M2.500 13a7.500 7.500 0 0 1 15 0" fill="none" stroke="#ff0000" stroke-width="1.300"/><path d="M5.500 13a4.500 4.500 0 0 1 9 0" fill="none" stroke="#0000ff" stroke-width="1.300"/><text x="10" y="17" font-size="8" fill="#000" font-weight="bold" text-anchor="middle" font-family="'Liberation Sans',Arial,sans-serif" >FIB</text></svg></div>
<div class="btn" style="left:1254px;top:242px;width:22px;height:21px;"><svg class="abs" style="left:0px;top:0px" width="20" height="19" viewBox="0 0 20 19"><path d="M3 10l15-8" stroke="#0000ff" stroke-width="1.200"/><path d="M3 10l15-4" stroke="#ff0000" stroke-width="1.200"/><path d="M3 10h15" stroke="#000" stroke-width="1.200"/><path d="M3 10l15 4" stroke="#008000" stroke-width="1.200"/><path d="M3 10l15 8" stroke="#0000ff" stroke-width="1.200"/><path d="M2 10l5-3v6z" fill="#000"/></svg></div>
<div class="btn" style="left:1254px;top:264px;width:22px;height:21px;"><svg class="abs" style="left:0px;top:0px" width="20" height="19" viewBox="0 0 20 19"><rect x="3.500" y="3.500" width="13" height="12" fill="#fff" stroke="#000" stroke-width="1.300"/><path d="M6.500 4v11M9.500 4v11M12.500 4v11M4 6.500h12M4 9.500h12M4 12.500h12" stroke="#606060" stroke-width="0.800"/></svg></div>
<div class="btn" style="left:1254px;top:286px;width:22px;height:21px;"><svg class="abs" style="left:0px;top:0px" width="20" height="19" viewBox="0 0 20 19"><ellipse cx="10" cy="6.500" rx="7.500" ry="4.500" fill="#00ffff" stroke="#ff0000" stroke-width="1.300"/><text x="10" y="17.5" font-size="6.3" fill="#000" font-weight="bold" text-anchor="middle" font-family="'Liberation Sans',Arial,sans-serif" >ELIPS</text></svg></div>
<div class="btn" style="left:1254px;top:308px;width:22px;height:21px;"><svg class="abs" style="left:0px;top:0px" width="20" height="19" viewBox="0 0 20 19"><path d="M3 7l7-5M6 10l7-5M9 13l7-5" stroke="#008000" stroke-width="1.100"/><path d="M4.500 4l9 12M8.500 3l9 10" stroke="#0000c0" stroke-width="1.100"/><path d="M2 9l9 9" stroke="#c00000" stroke-width="1.100"/></svg></div>
<div class="btn" style="left:1254px;top:330px;width:22px;height:21px;"><svg class="abs" style="left:0px;top:0px" width="20" height="19" viewBox="0 0 20 19"><text x="10" y="14" font-size="11.5" fill="#000" font-weight="bold" text-anchor="middle" font-family="'Liberation Sans',Arial,sans-serif" >PTI</text></svg></div>
<div class="btn" style="left:1254px;top:352px;width:22px;height:21px;"><svg class="abs" style="left:0px;top:0px" width="20" height="19" viewBox="0 0 20 19"><rect x="3.500" y="3.500" width="14" height="12" fill="#fff" stroke="#0000ff" stroke-width="1.500"/><path d="M8 4v11M12.500 4v11M4 7.500h13M4 11.500h13" stroke="#0000ff" stroke-width="1.300"/></svg></div>
<div class="btn" style="left:1254px;top:374px;width:22px;height:21px;"><svg class="abs" style="left:0px;top:0px" width="20" height="19" viewBox="0 0 20 19"><rect x="3" y="2" width="14" height="3" fill="#ff40ff"/><rect x="3" y="5.500" width="14" height="3.500" fill="#00e8e8"/><text x="10" y="17" font-size="7.5" fill="#000" font-weight="normal" text-anchor="middle" font-family="'Liberation Sans',Arial,sans-serif" >MOB</text></svg></div>
<div class="btn" style="left:1254px;top:396px;width:22px;height:21px;"><svg class="abs" style="left:0px;top:0px" width="20" height="19" viewBox="0 0 20 19"><circle cx="11" cy="8" r="5.500" fill="#e8ffe8" stroke="#000" stroke-width="1.200"/><path d="M6.500 12.500l-4 4" stroke="#808080" stroke-width="2.400"/><text x="11" y="11.5" font-size="9" fill="#008000" font-weight="bold" text-anchor="middle" font-family="'Liberation Sans',Arial,sans-serif" >1</text></svg></div>
<div class="btn" style="left:1254px;top:418px;width:22px;height:21px;"><svg class="abs" style="left:0px;top:0px" width="20" height="19" viewBox="0 0 20 19"><text x="10" y="16" font-size="17" fill="#000" font-weight="bold" text-anchor="middle" font-family="'Liberation Serif',serif" >A</text></svg></div>
<div class="btn" style="left:1254px;top:440px;width:22px;height:21px;"><svg class="abs" style="left:0px;top:0px" width="20" height="19" viewBox="0 0 20 19"><circle cx="8.500" cy="8" r="5" fill="#fff" stroke="#000" stroke-width="1.300"/><path d="M6 8h5M8.500 5.500v5" stroke="#000" stroke-width="1.200"/><path d="M12 11.500l5 5" stroke="#000" stroke-width="2.200"/></svg></div>
<div class="btn" style="left:1254px;top:467.5px;width:22px;height:21px;"><svg class="abs" style="left:0px;top:0px" width="20" height="19" viewBox="0 0 20 19"><path d="M4 6.500l4-4 6.500 5.500-4 4z" fill="#e00000" stroke="#000" stroke-width="0.900"/><path d="M10.500 12l4-4 3.500 3.500-3.500 4.500z" fill="#f0e000" stroke="#000" stroke-width="0.900"/><path d="M4 6.500v2l6.500 5.500v-2z" fill="#600000"/></svg></div>
<div class="btn" style="left:1254px;top:489.5px;width:22px;height:21px;"><svg class="abs" style="left:0px;top:0px" width="20" height="19" viewBox="0 0 20 19"><rect x="3.500" y="3.500" width="13" height="12" fill="#fff" stroke="#808080" stroke-width="1"/><path d="M4.500 5l11 9M15.500 5l-11 9M10 4v11M4 9.500h12" stroke="#000" stroke-width="1.300" stroke-dasharray="1.500 1.200"/></svg></div>
<div class="btn" style="left:1254px;top:511px;width:22px;height:21px;"><svg class="abs" style="left:0px;top:0px" width="20" height="19" viewBox="0 0 20 19"><path d="M3.500 3.500l6-1 6.500 2v11.500l-6.500-2-6 1z" fill="#fff" stroke="#000" stroke-width="1"/><path d="M9.500 2.500v11.500" stroke="#000" stroke-width="1"/><path d="M5 6l3-0.500M5 8.500l3-0.500M5 11l3-0.500M11 6l4 1.200M11 8.500l4 1.200M11 11l4 1.200" stroke="#000" stroke-width="0.900"/></svg></div>
<div class="btn p" style="left:1254px;top:536.5px;width:22px;height:21px;"><svg class="abs" style="left:0px;top:0px" width="20" height="19" viewBox="0 0 20 19"><path d="M5.500 2.500v8.500a4.500 4.500 0 0 0 9 0v-8.500" fill="none" stroke="#ff0000" stroke-width="3"/><path d="M4 1.500h3v2.500h-3zM13 1.500h3v2.500h-3z" fill="#000"/></svg></div>
<div class="abs" style="left:0;top:963px;width:1280px;height:20px;background:#d4d0c8;border-top:1px solid #fff"></div>
<div class="abs" style="left:2px;top:967.5px;font-size:12px;letter-spacing:-0.42px">For Help, press F1</div>
<div class="sunk" style="left:0px;top:966px;width:951px;height:17px;box-shadow:none"></div>
<div class="sunk" style="left:953px;top:966px;width:326px;height:17px;box-shadow:none"></div>
<div class="abs" style="left:957px;top:967.5px;font-size:12px;letter-spacing:-0.42px">Page: 14 - SP 500 for blog</div>
<svg class="chartsvg" width="1280" height="983" viewBox="0 0 1280 983">
<defs><clipPath id="cp"><rect x="78" y="98" width="1110" height="650"/></clipPath><clipPath id="cpo"><rect x="78" y="755" width="1110" height="164"/></clipPath></defs>
<g clip-path="url(#cp)" shape-rendering="crispEdges">
<line x1="78" y1="124.3" x2="395.6" y2="124.3" stroke="#c0c0c0" stroke-width="1"/>
<line x1="78" y1="130.6" x2="367" y2="130.6" stroke="#c0c0c0" stroke-width="1"/>
<line x1="78" y1="136.8" x2="319.6" y2="136.8" stroke="#808080" stroke-width="2"/>
<line x1="78" y1="144.1" x2="290.5" y2="144.1" stroke="#a0a0a0" stroke-width="1.4"/>
<line x1="78" y1="150.2" x2="248.6" y2="150.2" stroke="#c0c0c0" stroke-width="1"/>
<line x1="78" y1="156" x2="220.6" y2="156" stroke="#a0a0a0" stroke-width="1.2"/>
<line x1="78" y1="161.5" x2="157.8" y2="161.5" stroke="#c0c0c0" stroke-width="1"/>
<line x1="78" y1="167.6" x2="102.8" y2="167.6" stroke="#808080" stroke-width="2"/>
<line x1="78" y1="172.2" x2="80.5" y2="172.2" stroke="#c0c0c0" stroke-width="1"/>
<line x1="303.9" y1="152.3" x2="550" y2="152.3" stroke="#c0c0c0" stroke-width="1"/>
<line x1="353.7" y1="159.2" x2="550" y2="159.2" stroke="#c0c0c0" stroke-width="1"/>
<line x1="430.2" y1="164.5" x2="550" y2="164.5" stroke="#808080" stroke-width="1.4"/>
<line x1="420" y1="169.1" x2="423.7" y2="169.1" stroke="#c0c0c0" stroke-width="1"/>
<line x1="472.2" y1="170.4" x2="550" y2="170.4" stroke="#808080" stroke-width="1.6"/>
<line x1="514" y1="176.3" x2="550" y2="176.3" stroke="#c0c0c0" stroke-width="1"/>
<line x1="373.6" y1="169" x2="395" y2="169" stroke="#c0c0c0" stroke-width="1"/>
<line x1="402" y1="169" x2="423.5" y2="169" stroke="#c0c0c0" stroke-width="1"/>
<line x1="563.2" y1="150.3" x2="808" y2="150.3" stroke="#c0c0c0" stroke-width="1"/>
<line x1="563.2" y1="157.4" x2="759.8" y2="157.4" stroke="#c0c0c0" stroke-width="1"/>
<line x1="563.2" y1="163.5" x2="682.6" y2="163.5" stroke="#808080" stroke-width="1.4"/>
<line x1="563.2" y1="168.1" x2="641" y2="168.1" stroke="#808080" stroke-width="1.4"/>
<line x1="563.2" y1="175.2" x2="598.8" y2="175.2" stroke="#c0c0c0" stroke-width="1"/>
<line x1="353.7" y1="208.2" x2="585" y2="208.2" stroke="#c0c0c0" stroke-width="1"/>
<line x1="430.2" y1="214.2" x2="585" y2="214.2" stroke="#808080" stroke-width="1.4"/>
<line x1="472.2" y1="220.3" x2="585" y2="220.3" stroke="#808080" stroke-width="1.4"/>
<line x1="514" y1="225.4" x2="585" y2="225.4" stroke="#c0c0c0" stroke-width="1"/>
<line x1="521.2" y1="230" x2="585" y2="230" stroke="#a0a0a0" stroke-width="1.4"/>
<line x1="549.6" y1="234.7" x2="585.5" y2="234.7" stroke="#808080" stroke-width="2"/>
<line x1="598" y1="207.3" x2="830" y2="207.3" stroke="#c0c0c0" stroke-width="1"/>
<line x1="598" y1="212.4" x2="752.7" y2="212.4" stroke="#808080" stroke-width="1.4"/>
<line x1="598" y1="217.5" x2="710.5" y2="217.5" stroke="#808080" stroke-width="1.4"/>
<line x1="598" y1="222.4" x2="668.8" y2="222.4" stroke="#c0c0c0" stroke-width="1"/>
<line x1="598" y1="228.5" x2="661.7" y2="228.5" stroke="#a0a0a0" stroke-width="1.4"/>
<line x1="598" y1="234.7" x2="635" y2="234.7" stroke="#808080" stroke-width="2"/>
<line x1="136.5" y1="240.3" x2="346.6" y2="240.3" stroke="#c0c0c0" stroke-width="1"/>
<line x1="78" y1="243.3" x2="136.5" y2="243.3" stroke="#c0c0c0" stroke-width="1"/>
<line x1="136.5" y1="246.4" x2="325.8" y2="246.4" stroke="#c0c0c0" stroke-width="1"/>
<line x1="78" y1="249.2" x2="136.5" y2="249.2" stroke="#c0c0c0" stroke-width="1"/>
<line x1="136.5" y1="250.9" x2="305.5" y2="250.9" stroke="#808080" stroke-width="2"/>
<line x1="78" y1="253.6" x2="138" y2="253.6" stroke="#808080" stroke-width="2"/>
<line x1="136.5" y1="258.4" x2="213.7" y2="258.4" stroke="#a0a0a0" stroke-width="1.4"/>
<line x1="78" y1="261.6" x2="136.5" y2="261.6" stroke="#a0a0a0" stroke-width="1.4"/>
<line x1="115" y1="264.5" x2="157.7" y2="264.5" stroke="#c0c0c0" stroke-width="1"/>
<line x1="129.2" y1="268.7" x2="144" y2="268.7" stroke="#c0c0c0" stroke-width="1"/>
<line x1="308" y1="245.7" x2="326" y2="245.7" stroke="#c0c0c0" stroke-width="1"/>
<line x1="80" y1="355.3" x2="101.5" y2="355.3" stroke="#c0c0c0" stroke-width="1"/>
<line x1="80" y1="360.4" x2="95" y2="360.4" stroke="#a0a0a0" stroke-width="1.4"/>
<line x1="514.7" y1="272" x2="522.6" y2="272" stroke="#a0a0a0" stroke-width="1.4"/>
<line x1="529" y1="271.5" x2="536.7" y2="271.5" stroke="#a0a0a0" stroke-width="1.4"/>
<line x1="675" y1="339" x2="683" y2="339" stroke="#c0c0c0" stroke-width="1.2"/>
<line x1="696" y1="339" x2="703.6" y2="339" stroke="#c0c0c0" stroke-width="1.2"/>
<line x1="318.4" y1="549" x2="332.5" y2="549" stroke="#c0c0c0" stroke-width="1.2"/>
<line x1="339" y1="549.7" x2="354" y2="549.7" stroke="#c0c0c0" stroke-width="1.2"/>
<line x1="395" y1="174.7" x2="395" y2="210.4" stroke="#808080" stroke-width="2"/>
<line x1="555.9" y1="176.9" x2="555.9" y2="211.8" stroke="#808080" stroke-width="2"/>
<line x1="591" y1="238.8" x2="591" y2="273" stroke="#808080" stroke-width="2"/>
<line x1="136" y1="268.7" x2="136" y2="304.5" stroke="#808080" stroke-width="2"/>
<line x1="520.5" y1="272.4" x2="520.5" y2="305.8" stroke="#808080" stroke-width="2"/>
<line x1="689" y1="337.6" x2="689" y2="372.5" stroke="#808080" stroke-width="2"/>
<line x1="332" y1="549" x2="332" y2="583.6" stroke="#808080" stroke-width="2"/>
<polyline points="82,325.7 85.5,327.8 89,329.8 92.5,331.6 96,333.3 99.5,334.6 103,335.8 106.5,336.9 110,338 113.5,339.2 117,340.6 120.5,342.5 124,344.5 127.5,346.7 131,348.7 134.5,350.6 138,352.4 141.5,354.3 145,355.9 148.5,356.9 152,357.2 155.5,357.4 159,357.6 162.5,357.7 166,357.8 169.5,357.9 173,358 176.5,358.2 180,358.4 183.5,358.6 187,358.8 190.5,358.9 194,359 197.5,358.3 201,356.7 204.5,355.4 208,353.9 211.5,352.5 215,351.1 218.5,349.7 222,348.3 225.5,347.1 229,345.9 232.5,344.6 236,343.2 239.5,341.6 243,339.9 246.5,338.4 250,337.1 253.5,336 257,335 260.5,333.9 264,332.6 267.5,330.9 271,328.2 274.5,324.9 278,321.4 281.5,317.9 285,314.8 288.5,312.1 292,309.6 295.5,307.1 299,304.8 302.5,302.5 306,300.3 309.5,298.1 313,295.9 316.5,294.2 320,293 323.5,292.4 327,291.9 330.5,291.3 334,290.5 337.5,289.5 341,288.6 344.5,288 348,288.1 351.5,288.5 355,289.1 358.5,289.9 362,290.7 365.5,291.8 369,293.1 372.5,294.5 376,295.9 379.5,297.4 383,299 386.5,300.5 390,301.8 393.5,303.1 397,304.2 400.5,305 404,305.8 407.5,306.3 411,306.4 414.5,306.2 418,305.8 421.5,303.8 425,303.7 428.5,304.8 432,306.4 435.5,308 439,309.5 442.5,311.3 446,313.1 449.5,315 453,316.9 456.5,318.8 460,320.7 463.5,322.7 467,324.8 470.5,327 474,329.3 477.5,331.9 481,335.1 484.5,338.8 488,342.3 491.5,345.5 495,348.4 498.5,351.3 502,354.1 505.5,357 509,359.9 512.5,363 516,366.6 519.5,370.2 523,373.6 526.5,376.8 530,379.8 533.5,382.4 537,384.2 540.5,385.7 544,387 547.5,388.6 551,390.9 554.5,393.9 558,397.1 561.5,400.7 565,404.3 568.5,407.4 572,410.3 575.5,412.9 579,415.1 582.5,417 586,419.3 589.5,422.2 593,425 596.5,427.2 600,428.9 603.5,430.6 607,432.4 610.5,434.2 614,435.8 617.5,437.5 621,438.9 624.5,439.6 628,440 631.5,440.2 635,440 638.5,439.7 642,439.3 645.5,439.4 649,439.7 652.5,440.1 656,440.1 659.5,439 663,437.7 666.5,437 670,436.7 673.5,436.6 677,436.5 680.5,437.1 684,438.5 687.5,439.9 691,440.7 694.5,441.3 698,441.8 701.5,442.1 705,442.3 708.5,442.5 712,442.9 715.5,444.4 719,444.2 722.5,442.4 726,440.3 729.5,438.6 733,436.8 736.5,435 740,433.2 743.5,431.4 747,430.1 750.5,429.1 754,428.1 757.5,427.1 761,426 764.5,424.9 766.7,424.2" fill="none" stroke="#ff2020" stroke-width="1.25" />
<polyline points="81,344 84.5,344.4 88,344.8 91.5,345.3 95,345.7 98.5,346.1 102,346.5 105.5,347 109,347.4 112.5,347.8 116,348.3 119.5,348.7 123,349.1 126.5,349.6 130,350 133.5,350.5 137,350.9 140.5,351.5 144,352 147.5,352.6 151,353.2 154.5,353.8 158,354.5 161.5,355.1 165,355.7 168.5,356.3 172,356.8 175.5,357.3 179,357.7 182.5,358.1 186,358.4 189.5,358.6 193,358.7 196.5,358.7 200,358.7 203.5,358.6 207,358.6 210.5,358.5 214,358.4 217.5,358.3 221,358.2 224.5,358.1 228,358 231.5,357.9 235,357.7 238.5,357.6 242,357.5 245.5,357.4 249,357.3 252.5,357.2 256,357.1 259.5,357 263,356.9 266.5,356.9 270,356.8 273.5,356.7 277,356.6 280.5,356.6 284,356.5 287.5,356.4 291,356.4 294.5,356.3 298,356.3 301.5,356.2 305,356.2 308.5,356.2 312,356.2 315.5,356.3 319,356.3 322.5,356.4 326,356.5 329.5,356.6 333,356.7 336.5,356.9 340,357 343.5,357.1 347,357.2 350.5,357.4 354,357.5 357.5,357.7 361,357.8 364.5,358 368,358.2 371.5,358.4 375,358.5 378.5,358.7 382,358.9 385.5,359.1 389,359.3 392.5,359.5 396,359.7 399.5,360 403,360.2 406.5,360.4 410,360.7 413.5,360.9 417,361.2 420.5,361.5 424,361.8 427.5,362.1 431,362.4 434.5,362.7 438,363.1 441.5,363.5 445,363.9 448.5,364.3 452,364.7 455.5,365.2 459,365.7 462.5,366.2 466,366.7 469.5,367.3 473,367.9 476.5,368.6 480,369.2 483.5,369.9 487,370.5 490.5,371.2 494,371.8 497.5,372.4 501,373 504.5,373.6 508,374.1 511.5,374.7 515,375.3 518.5,375.9 522,376.5 525.5,377.2 529,377.9 532.5,378.7 536,379.5 539.5,380.4 543,381.2 546.5,382.1 550,383 553.5,383.9 557,384.7 560.5,385.5 564,386.2 567.5,386.9 571,387.6 574.5,388.3 578,389 581.5,389.7 585,390.3 588.5,391 592,391.7 595.5,392.4 599,393.1 602.5,393.9 606,394.6 609.5,395.3 613,395.9 616.5,396.5 620,397.1 623.5,397.6 627,398.1 630.5,398.6 634,399.1 637.5,399.6 641,400.1 644.5,400.6 648,401 651.5,401.3 655,401.6 658.5,401.8 662,402 665.5,402.3 669,402.5 672.5,402.9 676,403.4 679.5,403.9 683,404.5 686.5,405.1 690,405.6 693.5,406.1 697,406.7 700.5,407.3 704,407.8 707.5,408.2 711,408.6 714.5,408.8 718,408.9 721.5,408.9 725,409 728.5,409 732,409 735.5,409.1 739,409.1 742.5,409.2 746,409.2 749.5,409.3 753,409.4 756.5,409.6 760,409.7 763.5,409.9 766.7,410" fill="none" stroke="#00ffff" stroke-width="1.6" />
<polyline points="82,220 85.5,221 89,221.9 92.5,222.9 96,223.8 99.5,224.7 103,225.6 106.5,226.5 110,227.3 113.5,228.2 117,229 120.5,229.8 124,230.6 127.5,231.4 131,232.2 134.5,232.9 138,233.6 141.5,234.4 145,235.1 148.5,235.7 152,236.4 155.5,237.1 159,237.8 162.5,238.4 166,239 169.5,239.6 173,240.2 176.5,240.8 180,241.4 183.5,242 187,242.5 190.5,243.1 194,243.6 197.5,244.1 201,244.6 204.5,245.1 208,245.5 211.5,246 215,246.5 218.5,246.9 222,247.3 225.5,247.8 229,248.2 232.5,248.7 236,249.1 239.5,249.5 243,250 246.5,250.4 250,250.9 253.5,251.4 257,251.8 260.5,252.3 264,252.7 267.5,253.2 271,253.6 274.5,254.1 278,254.5 281.5,255 285,255.5 288.5,255.9 292,256.4 295.5,256.9 299,257.3 302.5,257.8 306,258.3 309.5,258.7 313,259.2 316.5,259.6 320,260.1 323.5,260.6 327,261.2 330.5,262 334,262.8 337.5,263.7 341,264.7 344.5,265.6 348,266.5 351.5,267.4 355,268.4 358.5,269.3 362,270.3 365.5,271.2 369,272.2 372.5,273.2 376,274.2 379.5,275.3 383,276.3 386.5,277.4 390,278.5 393.5,279.5 397,280.5 400.5,281.5 404,282.4 407.5,283.3 411,284.2 414.5,285.1 418,286 421.5,286.8 425,287.6 428.5,288.5 432,289.3 435.5,290.2 439,291.1 442.5,292 446,292.9 449.5,293.7 453,294.6 456.5,295.5 460,296.4 463.5,297.3 467,298.3 470.5,299.4 474,300.5 477.5,301.7 481,303 484.5,304.4 488,305.8 491.5,307.2 495,308.7 498.5,310.2 502,311.8 505.5,313.4 509,315 512.5,316.6 516,318 519.5,319.3 523,320.5 526.5,321.7 530,322.8 533.5,324.1 537,325.3 540.5,326.6 544,327.9 547.5,329.3 551,330.9 554.5,332.7 558,334.5 561.5,336.1 565,337.7 568.5,339.2 572,340.8 575.5,342.4 579,343.9 582.5,345.5 586,347 589.5,348.6 593,350.1 596.5,351.7 600,353.3 603.5,354.9 607,356.5 610.5,358.1 614,359.6 617.5,361 621,362.5 624.5,363.8 628,365.2 631.5,366.6 635,368 638.5,369.5 642,370.9 645.5,372.4 649,373.7 652.5,374.9 656,376 659.5,377 663,378 666.5,379 670,380.1 673.5,381.1 677,382.2 680.5,383.2 684,384.3 687.5,385.3 691,386.3 694.5,387.2 698,388.1 701.5,389 705,389.9 708.5,390.6 712,391.3 715.5,392 719,392.6 722.5,393.3 726,394 729.5,394.7 733,395.4 736.5,396.1 740,396.8 743.5,397.6 747,398.3 750.5,399.1 754,399.8 757.5,400.6 761,401.3 764.5,402.1 766.7,402.6" fill="none" stroke="#0000ff" stroke-width="1.5" />
<polyline points="81,546 84.5,548 88,549.8 91.5,551.6 95,553.2 98.5,554.2 102,554.8 105.5,555.4 109,556.1 112.5,557.3 116,558.8 119.5,560.5 123,562.4 126.5,564.2 130,565.9 133.5,567.7 137,569.7 140.5,571.5 144,573.1 147.5,574.1 151,574.9 154.5,575.6 158,576 161.5,576 165,575.9 168.5,575.7 172,575.6 175.5,575.4 179,575.3 182.5,575.2 186,575.1 189.5,574.9 193,574.7 196.5,574.2 200,573.5 203.5,572.6 207,571.7 210.5,570.7 214,569.4 217.5,568.1 221,566.6 224.5,565.3 228,563.9 231.5,562.6 235,561.2 238.5,559.8 242,558.5 245.5,557.2 249,556 252.5,554.7 256,553.3 259.5,551.9 263,550.4 266.5,548.9 270,547.3 273.5,545.5 277,543.6 280.5,541.3 284,538.7 287.5,536.1 291,533.4 294.5,531 298,528.7 301.5,526.5 305,524.4 308.5,522.6 312,520.9 315.5,519.3 319,517.8 322.5,516.5 326,515.4 329.5,514.5 333,513.5 336.5,512.7 340,512 343.5,511.6 347,511.5 350.5,511.6 354,511.7 357.5,512.1 361,513 364.5,514.3 368,515.8 371.5,517.2 375,518.3 378.5,519.5 382,520.6 385.5,521.7 389,522.7 392.5,523.7 396,524.6 399.5,525.5 403,526.4 406.5,527.1 410,527.5 413.5,527.4 417,527 420.5,526.6 424,526.5 427.5,527.1 431,528.1 434.5,529.3 438,530.6 441.5,531.8 445,533 448.5,534.3 452,535.7 455.5,537.3 459,539 462.5,541.1 466,543.4 469.5,545.9 473,548.5 476.5,551.3 480,554.2 483.5,557.4 487,560.6 490.5,563.8 494,566.8 497.5,569.8 501,572.7 504.5,575.5 508,578.2 511.5,580.6 515,582.5 518.5,584.5 522,587.3 525.5,590.4 529,593.5 532.5,596 536,598.4 539.5,600.6 543,602.9 546.5,605.1 550,607.3 553.5,609.5 557,611.7 560.5,613.9 564,616.2 567.5,618.5 571,620.8 574.5,623.1 578,625.3 581.5,627.5 585,629.5 588.5,631.5 592,633.6 595.5,636 599,638.3 602.5,640.5 606,642.6 609.5,644.5 613,646 616.5,647.3 620,648.3 623.5,648.8 627,648.8 630.5,648.8 634,648.8 637.5,648.8 641,648.8 644.5,648.7 648,648.6 651.5,648.4 655,648.3 658.5,648 662,647.4 665.5,647 669,646.8 672.5,647.1 676,647.5 679.5,648.1 683,648.6 686.5,649.3 690,650 693.5,650.7 697,651.2 700.5,651.7 704,652 707.5,652.3 711,652.3 714.5,652.3 718,652.3 721.5,652.3 725,651.4 728.5,649.6 732,647.9 735.5,646 739,644.1 742.5,642.6 746,641.3 749.5,640.2 753,639.2 756.5,638.1 760,637.2 763.5,636.2 766.8,635.4" fill="none" stroke="#008080" stroke-width="1" />
<polyline points="80.8,442.8 84.3,446.6 87.8,450.3 91.3,454 94.8,457.6 98.3,461.3 101.8,465.1 105.3,468.8 108.8,472 112.3,474.6 115.8,476.9 119.3,478 122.8,478 126.3,478 129.8,478 133.3,477.8 136.8,476.8 140.3,475.4 143.8,473.8 147.3,471.8 150.8,469.1 154.3,466.1 157.8,462.9 161.3,459.3 164.8,455.2 168.3,450.3 171.8,446.6 175.3,444.5 178.8,442.8 182.3,441.9 185.8,441.8 189.3,441.8 192.8,441.8 196.3,438.6 199.8,433.2 203.3,429.3 206.8,425.5 210.3,421.4 213.8,416.6 217.3,411.8 220.8,407.9 224.3,404.7 227.8,401.7 231.3,398.9 234.8,396.3 238.3,393.5 241.8,390.3 245.3,386.7 248.8,382.8 252.3,378.8 255.8,374.4 259.3,369.6 262.8,364.3 266.3,358.6 269.8,352.6 273.3,346.5 276.8,340.3 280.3,334.1 283.8,327.6 287.3,321.1 290.8,314.6 294.3,308.3 297.8,302.1 301.3,295.8 304.8,289.2 308.3,282.6 311.8,279.3 315.3,276.9 318.8,274.2 322.3,271.3 325.8,268.5 329.3,266 332.8,263.6 336.3,262 339.8,260.9 343.3,260.1 346.8,259.9 350.3,260.4 353.8,261.2 357.3,262.1 360.8,263 364.3,264.2 367.8,265.7 371.3,268.3 374.8,272.2 378.3,276 381.8,279.7 385.3,283.4 388.8,287 392.3,290.1 395.8,292.6 399.3,294.8 402.8,296.9 406.3,299 409.8,301.1 413.3,303 416.8,305.1 420.3,307.6 423.8,311.2 427.3,316.1 430.8,321 434.3,325.7 437.8,330.6 441.3,336.1 444.8,342.7 448.3,349.1 451.8,354.5 455.3,359.3 458.8,364.1 462.3,369.1 465.8,374.1 469.3,378.6 472.8,382.4 476.3,386.5 479.8,392.2 483.3,399.8 486.8,407 490.3,412.9 493.8,418.4 497.3,423.6 500.8,428.7 504.3,433.5 507.8,437.9 511.3,442 514.8,446.2 518.3,451.2 521.8,456.4 525.3,460.5 528.8,463.3 532.3,465.9 535.8,468.9 539.3,472.1 542.8,475 546.3,478.2 549.8,483.1 553.3,489.8 556.8,496.5 560.3,502.6 563.8,508.6 567.3,514.2 570.8,519.6 574.3,524.7 577.8,529.8 581.3,535 584.8,539.6 588.3,543.4 591.8,546.9 595.3,549.9 598.8,552.6 602.3,554.9 605.8,556.8 609.3,558.3 612.8,559.4 616.3,560 619.8,560.4 623.3,560.4 626.8,558.6 630.3,555.9 633.8,554 637.3,552.7 640.8,551.3 644.3,549.7 647.8,547.7 651.3,545.1 654.8,539.8 658.3,533.4 661.8,528.9 665.3,525.2 668.8,522.9 672.3,523.1 675.8,524 679.3,524.7 682.8,525.2 686.3,525.5 689.8,525.5 693.3,524 696.8,521.8 700.3,519 703.8,515 707.3,512.5 710.8,512.2 714.3,511.8 717.8,510.5 721.3,507 724.8,499.7 728.3,492.7 731.8,487.1 735.3,481.8 738.8,476.7 742.3,471.9 745.8,467.1 749.3,462.3 752.8,457.9 756.3,454.2 759.8,450.9 763.3,447.9 766.7,445.6" fill="none" stroke="#808080" stroke-width="2.2" />
<polyline points="80,578.5 83.5,581.9 87,585.3 90.5,588.9 94,592.8 97.5,596.8 101,600.6 104.5,603.9 108,607 111.5,609.5 115,611 118.5,612.3 122,613 125.5,612.8 129,612.3 132.5,611.6 136,610.8 139.5,609.9 143,608.8 146.5,607.2 150,604.2 153.5,600.6 157,597.1 160.5,593.4 164,589.9 167.5,586.9 171,584.1 174.5,581.9 178,580.8 181.5,580.1 185,579.6 188.5,579 192,578 195.5,575.8 199,572.6 202.5,568.8 206,565.2 209.5,561.1 213,557.1 216.5,553.2 220,549.4 223.5,545.8 227,542.3 230.5,538.6 234,534.8 237.5,531 241,527.1 244.5,523.2 248,519.3 251.5,515.6 255,511.9 258.5,508.2 262,504.3 265.5,499.9 269,494.9 272.5,489.3 276,483.3 279.5,477.1 283,470.6 286.5,464.3 290,457.9 293.5,451.9 297,446.3 300.5,440.9 304,436.9 307.5,434.7 311,431.3 314.5,427 318,423.5 321.5,420.9 325,418.6 328.5,416.2 332,413.7 335.5,411.3 339,408.7 342.5,406 346,405 349.5,406.1 353,407.9 356.5,409.7 360,411.9 363.5,414 367,415.8 370.5,417.4 374,419.3 377.5,421.5 381,424.1 384.5,426.7 388,429.5 391.5,432.2 395,434.5 398.5,436.3 402,438 405.5,439.8 409,442.2 412.5,445 416,447.6 419.5,449.5 423,451.1 426.5,454.1 430,459.7 433.5,465.7 437,471.9 440.5,477.7 444,482.7 447.5,487.5 451,492.4 454.5,497.6 458,502.3 461.5,506 465,509.3 468.5,513 472,517.5 475.5,522.6 479,528.5 482.5,535.7 486,542.9 489.5,549.2 493,554.9 496.5,559.8 500,564.3 503.5,568.9 507,573.6 510.5,578.3 514,583.1 517.5,587.7 521,591.6 524.5,595.2 528,598.5 531.5,601.6 535,604.5 538.5,607.2 542,610.2 545.5,613.6 549,617.2 552.5,621.2 556,625.7 559.5,631.2 563,637.1 566.5,642.7 570,647.7 573.5,652.4 577,656.9 580.5,661.5 584,666.4 587.5,670.9 591,674.6 594.5,677.4 598,679.8 601.5,681.8 605,683.5 608.5,685 612,686.3 615.5,687.5 619,688.4 622.5,688.1 626,687.3 629.5,686 633,683.6 636.5,681.3 640,679.6 643.5,678 647,676.2 650.5,674 654,671.3 657.5,667.8 661,663 664.5,659.3 668,656.8 671.5,655.4 675,655.3 678.5,655.3 682,655.3 685.5,655.5 689,655.7 692.5,655.2 696,652.8 699.5,650 703,646.7 706.5,643.6 710,640.5 713.5,637.6 717,635.2 720.5,632.5 724,628.3 727.5,623.2 731,618.8 734.5,614.8 738,610.9 741.5,607 745,603.1 748.5,599.1 752,595.1 755.5,591.4 759,587.7 762.5,584.2 766,580.8 766.8,580" fill="none" stroke="#808080" stroke-width="2.2" />
<polyline points="81,681.8 84.5,680.9 88,678.3 91.5,674.6 95,669.9 98.5,659.6 102,648.5 105.5,640.8 109,633.7 112.5,628.5 116,626.3 119.5,625.4 123,624.7 126.5,623.6 130,621.9 133.5,620.2 137,618.7 140.5,617.9 144,616 147.5,607.4 151,598.5 154.5,589.8 158,586.9 161.5,585.9 165,585.4 168.5,585.1 172,584.8 175.5,584.6 179,584.6 182.5,584.8 186,585.1 189.5,585.5 193,586 196.5,586.8 200,588.2 203.5,589.9 207,591.4 210.5,592.5 214,593.6 217.5,594.4 221,594.7 224.5,593.2 228,591.7 231.5,591.9 235,592.2 238.5,592.6 242,592.6 245.5,591.9 249,590.6 252.5,588 256,583.8 259.5,578.4 263,570.9 266.5,562.6 270,553 273.5,545 277,537.5 280.5,529.6 284,522 287.5,515.1 291,509.2 294.5,504.6 298,500.7 301.5,496.8 305,491.9 308.5,485.5 312,479.4 315.5,475.5 319,471.4 322.5,463.1 326,452.7 329.5,441.2 333,430.3 336.5,422.8 340,416.6 343.5,411 347,410.2 350.5,413.9 354,418.3 357.5,423 361,428.2 364.5,433.8 368,440.5 371.5,450.2 375,461.3 378.5,469.9 382,477.4 385.5,485.9 389,494.9 392.5,502.9 396,510.2 399.5,515.9 403,520.5 406.5,524.3 410,527.6 413.5,528.9 417,529.4 420.5,527.6 424,527 427.5,531.7 431,535.3 434.5,536.5 438,537.3 441.5,538.3 445,539.5 448.5,540.5 452,540.9 455.5,541.2 459,541.7 462.5,546.3 466,552.3 469.5,558.6 473,564.2 476.5,569.8 480,576.5 483.5,584.2 487,592.7 490.5,602.5 494,613.5 497.5,625.3 501,636.9 504.5,645.4 508,653 511.5,661.4 515,670.6 518.5,682.5 522,693.3 525.5,700.9 529,704.3 532.5,705.3 536,706 539.5,706.5 543,707.1 546.5,708 550,708.9 553.5,709.6 557,709 560.5,704.1 564,702.7 567.5,705.7 571,709.2 574.5,712.7 578,714.6 581.5,713.4 585,712.2 588.5,714.1 592,714.9 595.5,711.1 599,706.2 602.5,702.1 606,698.7 609.5,697.5 613,696.8 616.5,696.4 620,696.3 623.5,696.6 627,697.2 630.5,698.1 634,699.5 637.5,702.2 641,704.7 644.5,707.2 648,708.5 651.5,707.5 655,705.5 658.5,703.9 662,703.7 665.5,704 669,704.6 672.5,705 676,705.4 679.5,705.8 683,706.2 686.5,706.5 690,706.2 693.5,703.4 697,699.7 700.5,695.9 704,691.2 707.5,685 711,677.6 714.5,668.2 718,662.4 721.5,662.4 725,662.4 728.5,657.2 732,650.3 735.5,646.1 739,643.8 742.5,642.9 746,641.7 749.5,637.8 753,632 756.5,624.4 760,617.3 763.5,613.4 766.8,611.6" fill="none" stroke="#000" stroke-width="1" />
<polyline points="80.8,345 84.3,355.1 87.8,365.1 91.3,375.3 94.8,387.4 98.3,401.3 101.8,417.4 105.3,434 108.8,448.7 112.3,460.5 115.8,467.2 119.3,470.3 122.8,472 126.3,472.5 129.8,472.8 133.3,473 136.8,472.3 140.3,470.4 143.8,470.7 147.3,473.8 150.8,474.8 154.3,474.4 157.8,473.3 161.3,465.7 164.8,457.5 168.3,452.5 171.8,448.6 175.3,445.1 178.8,441.9 182.3,440.1 185.8,440 189.3,440 192.8,440 196.3,435.2 199.8,426.3 203.3,417.9 206.8,408.5 210.3,397.9 213.8,385.2 217.3,374.3 220.8,367.9 224.3,363 227.8,357.5 231.3,349.7 234.8,341.2 238.3,333.3 241.8,325.8 245.3,318.7 248.8,312.3 252.3,306.2 255.8,301.8 259.3,298.8 262.8,296.3 266.3,293.8 269.8,291.3 273.3,288.7 276.8,285.2 280.3,279.8 283.8,273.6 287.3,267.4 290.8,260.9 294.3,254.4 297.8,248.5 301.3,242.9 304.8,238.6 308.3,235 311.8,233.5 315.3,233.5 318.8,233.8 322.3,236.1 325.8,239.5 329.3,245.7 332.8,251.1 336.3,254.2 339.8,256.4 343.3,258 346.8,258.3 350.3,257.2 353.8,255.2 357.3,252.8 360.8,250.3 364.3,246.8 367.8,242.8 371.3,238.6 374.8,234.9 378.3,231 381.8,227.1 385.3,223.8 388.8,221.4 392.3,219.5 395.8,218.7 399.3,218.4 402.8,218.4 406.3,220.2 409.8,222.7 413.3,225 416.8,227.8 420.3,232.8 423.8,239.7 427.3,246.4 430.8,253.5 434.3,261.3 437.8,270 441.3,279.5 444.8,290 448.3,301.2 451.8,313.1 455.3,322.9 458.8,330.2 462.3,334.2 465.8,337.3 469.3,340.6 472.8,343.8 476.3,347.4 479.8,352.8 483.3,360.1 486.8,363.8 490.3,362.9 493.8,361.2 497.3,360 500.8,360.6 504.3,362.2 507.8,363.6 511.3,363.6 514.8,362.7 518.3,361.8 521.8,361.6 525.3,362.4 528.8,363.9 532.3,365.8 535.8,368.5 539.3,372.7 542.8,380.7 546.3,389.7 549.8,399.4 553.3,410.3 556.8,425.8 560.3,441.7 563.8,451.8 567.3,458.6 570.8,465.7 574.3,473.1 577.8,480.8 581.3,488.6 584.8,496 588.3,502.8 591.8,509.8 595.3,517.7 598.8,526.1 602.3,534.5 605.8,541.5 609.3,547.6 612.8,552.4 616.3,556.4 619.8,558.6 623.3,557 626.8,553.6 630.3,548.3 633.8,541.9 637.3,535.7 640.8,529.6 644.3,524.5 647.8,519.9 651.3,514.8 654.8,509 658.3,502.4 661.8,493.9 665.3,486.7 668.8,481.4 672.3,478.7 675.8,477.6 679.3,478.6 682.8,479.5 686.3,479.2 689.8,478.5 693.3,477.9 696.8,477.2 700.3,476.4 703.8,475.5 707.3,475 710.8,475.4 714.3,477.4 717.8,480 721.3,472.6 724.8,464.3 728.3,458.8 731.8,453.2 735.3,445.8 738.8,439.5 742.3,434.7 745.8,431 749.3,427.9 752.8,425.9 756.3,425.1 759.8,424.3 763.3,422.4 766.7,419.5" fill="none" stroke="#800000" stroke-width="1" />
<polyline points="80.8,510.5 84.3,510.1 87.8,509.1 91.3,507.4 94.8,505.1 98.3,497 101.8,486.8 105.3,484.3 108.8,483.1 112.3,483.7 115.8,486.2 119.3,492 122.8,498.7 126.3,503.8 129.8,508.5 133.3,511.3 136.8,510.3 140.3,506.1 143.8,503.8 147.3,503.5 150.8,502.8 154.3,491.2 157.8,478.3 161.3,470.3 164.8,463.1 168.3,455.2 171.8,448.7 175.3,444 178.8,439.8 182.3,436.9 185.8,436.1 189.3,438.2 192.8,440 196.3,434.5 199.8,424.5 203.3,415.7 206.8,406.2 210.3,396.1 213.8,383.9 217.3,374.5 220.8,370.2 224.3,365.4 227.8,358.4 231.3,351.3 234.8,346 238.3,341.9 241.8,338.3 245.3,335.7 248.8,334.1 252.3,333.2 255.8,332.6 259.3,332.1 262.8,331.2 266.3,329.8 269.8,324.9 273.3,317.6 276.8,307.7 280.3,296.5 283.8,286.3 287.3,276 290.8,267.1 294.3,262 297.8,258.8 301.3,256.8 304.8,255.1 308.3,254 311.8,253.6 315.3,256.1 318.8,261.2 322.3,272.2 325.8,285 329.3,293.5 332.8,300.3 336.3,306.8 339.8,309.1 343.3,306.9 346.8,305.4 350.3,312.6 353.8,324.4 357.3,338.9 360.8,352.9 364.3,365.1 367.8,372.4 371.3,378.6 374.8,386.2 378.3,394.6 381.8,404 385.3,414.2 388.8,422.3 392.3,429.5 395.8,432.4 399.3,430.5 402.8,426.6 406.3,422.6 409.8,418.6 413.3,413.9 416.8,407.5 420.3,396.9 423.8,391 427.3,396.8 430.8,407.4 434.3,414.7 437.8,420.4 441.3,425.9 444.8,431.9 448.3,438.4 451.8,445 455.3,451.1 458.8,456.4 462.3,461.9 465.8,469.1 469.3,478.8 472.8,488.7 476.3,498.1 479.8,508.4 483.3,520.7 486.8,533.8 490.3,546 493.8,557.5 497.3,568.9 500.8,574.3 504.3,573.8 507.8,572.6 511.3,575 514.8,586.5 518.3,598.5 521.8,606 525.3,604.7 528.8,601.8 532.3,592.6 535.8,580.5 539.3,570.6 542.8,562.6 546.3,555.7 549.8,553.2 553.3,560.2 556.8,570 560.3,577.3 563.8,584.3 567.3,590.6 570.8,596.4 574.3,601.8 577.8,607.2 581.3,612.5 584.8,616.8 588.3,620.1 591.8,622 595.3,618.7 598.8,611.7 602.3,604.5 605.8,598 609.3,595 612.8,593.4 616.3,593.9 619.8,594.1 623.3,586.9 626.8,576.6 630.3,564.5 633.8,551.7 637.3,538.8 640.8,530.2 644.3,527.8 647.8,526.4 651.3,525.7 654.8,524.6 658.3,516.9 661.8,506.6 665.3,501.1 668.8,497.1 672.3,495.3 675.8,494.7 679.3,503.1 682.8,514.8 686.3,522.9 689.8,528.9 693.3,532.7 696.8,533.7 700.3,527.4 703.8,522.8 707.3,523.3 710.8,524.5 714.3,527.9 717.8,530.2 721.3,518 724.8,500.2 728.3,482.8 731.8,466.8 735.3,453.9 738.8,448.6 742.3,447.3 745.8,444.4 749.3,440.8 752.8,439.9 756.3,439.7 759.8,439.3 763.3,437.9 766.7,435.5" fill="none" stroke="#ff8000" stroke-width="1" />
<polyline points="80.8,545 84.3,549.2 87.8,552.8 91.3,556.2 94.8,559 98.3,558.8 101.8,553.2 105.3,546.6 108.8,544.5 112.3,546.8 115.8,550.4 119.3,553.4 122.8,555.9 126.3,558.8 129.8,564 133.3,570 136.8,570.8 140.3,569.3 143.8,566.4 147.3,562.8 150.8,561 154.3,557.6 157.8,548.2 161.3,537.3 164.8,525 168.3,513.8 171.8,508.3 175.3,504.4 178.8,501.4 182.3,499.6 185.8,499.1 189.3,502.3 192.8,505 196.3,500 199.8,490.3 203.3,479.3 206.8,466.1 210.3,454.5 213.8,443.9 217.3,435.4 220.8,431.7 224.3,430.1 227.8,428.3 231.3,423.5 234.8,415 238.3,407.2 241.8,403.6 245.3,401.1 248.8,399.1 252.3,397.9 255.8,397.7 259.3,399.7 262.8,399.3 266.3,391.8 269.8,386.3 273.3,381 276.8,374.6 280.3,365.6 283.8,356 287.3,345.4 290.8,336.1 294.3,330.2 297.8,327.3 301.3,324.8 304.8,322.9 308.3,321.8 311.8,321.5 315.3,325.7 318.8,332.9 322.3,341.5 325.8,347.9 329.3,353.7 332.8,361.6 336.3,369.5 339.8,374 343.3,374 346.8,370.6 350.3,386.7 353.8,397.5 357.3,410.1 360.8,423.7 364.3,434.3 367.8,442.8 371.3,450.6 374.8,458.6 378.3,466.3 381.8,473.7 385.3,481.3 388.8,487.7 392.3,492.9 395.8,496.3 399.3,495.6 402.8,493 406.3,489.3 409.8,482.2 413.3,473.1 416.8,462 420.3,451.8 423.8,453.3 427.3,465.8 430.8,472.9 434.3,477.8 437.8,483.7 441.3,491 444.8,498.1 448.3,504.3 451.8,510.1 455.3,514.9 458.8,518.1 462.3,521.3 465.8,526.8 469.3,536.9 472.8,547.1 476.3,556.5 479.8,565.9 483.3,575.9 486.8,588.4 490.3,601 493.8,613.2 497.3,622.6 500.8,628.9 504.3,631.8 507.8,632.7 511.3,636.7 514.8,646.6 518.3,657.4 521.8,663 525.3,662.4 528.8,660.7 532.3,650.5 535.8,637.5 539.3,630.2 542.8,624.6 546.3,621 549.8,618.8 553.3,621.8 556.8,630.5 560.3,639 563.8,647.9 567.3,656.8 570.8,667.6 574.3,677 577.8,679.5 581.3,676.4 584.8,676.6 588.3,681.6 591.8,683.5 595.3,679.2 598.8,672.3 602.3,663.7 605.8,656.8 609.3,653.8 612.8,652.3 616.3,652.7 619.8,653.3 623.3,643.9 626.8,631.6 630.3,620.2 633.8,610.6 637.3,602.5 640.8,595.1 644.3,589.6 647.8,587.3 651.3,586 654.8,582.3 658.3,574.5 661.8,567.3 665.3,560.4 668.8,557.2 672.3,556.2 675.8,555.9 679.3,563.4 682.8,573 686.3,583.8 689.8,588.7 693.3,587.6 696.8,585.6 700.3,583.5 703.8,580.7 707.3,579.3 710.8,581 714.3,585 717.8,590.6 721.3,584.9 724.8,574.3 728.3,560.7 731.8,545.8 735.3,532.2 738.8,520.7 742.3,510.6 745.8,505.2 749.3,503.1 752.8,501.6 756.3,500.3 759.8,499.1 763.3,498.1 766.7,497.4" fill="none" stroke="#ff8000" stroke-width="1" />
<polyline points="81.8,511.3 85.3,516.2 88.8,520.8 92.3,525.1 95.8,529 99.3,532.6 102.8,536.1 106.3,539.2 109.8,541.3 113.3,542.7 116.8,544 120.3,544.8 123.8,545 127.3,544.5 130.8,543.6 134.3,542.5 137.8,541 141.3,539.1 144.8,537.2 148.3,535.3 151.8,533.1 155.3,530 158.8,525.5 162.3,521.1 165.8,517.4 169.3,514 172.8,511.8 176.3,510.4 179.8,509.3 183.3,508.5 186.8,508.1 190.3,507.9 193.8,507.2 197.3,505 200.8,502.1 204.3,498.7 207.8,494.8 211.3,490.7 214.8,486.3 218.3,481.8 221.8,477.8 225.3,473.9 228.8,469.8 232.3,465.1 235.8,460.4 239.3,456.1 242.8,452.3 246.3,448.6 249.8,444.3 253.3,439.5 256.8,435 260.3,431.2 263.8,427.6 267.3,423.1 270.8,416.8 274.3,410.1 277.8,404.1 281.3,398.6 284.8,393 288.3,387.4 291.8,381.9 295.3,376.3 298.8,370.8 302.3,365.8 305.8,361.3 309.3,357.6 312.8,354.6 316.3,351.9 319.8,349.1 323.3,345.9 326.8,342.7 330.3,339.7 333.8,337.3 337.3,335 340.8,332.9 344.3,331.7 347.8,331.8 351.3,332.5 354.8,333.7 358.3,334.9 361.8,336.4 365.3,338.3 368.8,340.4 372.3,343 375.8,346.2 379.3,349.5 382.8,352.8 386.3,355.9 389.8,359.1 393.3,362.3 396.8,365.2 400.3,367.8 403.8,370.1 407.3,372.3 410.8,374.4 414.3,376.3 417.8,377.8 421.3,379.7 424.8,383.3 428.3,388.3 431.8,393.9 435.3,399.2 438.8,404 442.3,408.6 445.8,413.3 449.3,418 452.8,422.7 456.3,427.3 459.8,432 463.3,436.5 466.8,441 470.3,445.8 473.8,450.9 477.3,456.3 480.8,461.8 484.3,467.5 487.8,473.4 491.3,479.3 494.8,484.8 498.3,490.2 501.8,495.3 505.3,499.9 508.8,504.2 512.3,508.2 515.8,512.2 519.3,516.5 522.8,520.7 526.3,524.4 529.8,527.5 533.3,530.3 536.8,533.2 540.3,536.5 543.8,540.2 547.3,544.2 550.8,548.7 554.3,553.7 557.8,559.1 561.3,565.4 564.8,571.9 568.3,578 571.8,583.8 575.3,589.1 578.8,593.7 582.3,597.8 585.8,601.7 589.3,605.4 592.8,608.8 596.3,611.5 599.8,613.7 603.3,615.5 606.8,617.2 610.3,618.8 613.8,619.7 617.3,620.2 620.8,620.5 624.3,620.2 627.8,618.1 631.3,615.4 634.8,612 638.3,608.8 641.8,605.6 645.3,603.5 648.8,601.9 652.3,599.9 655.8,597.2 659.3,594.4 662.8,591.5 666.3,589.4 669.8,588.2 673.3,587.6 676.8,587.8 680.3,588.2 683.8,588.5 687.3,588.3 690.8,587.6 694.3,586.6 697.8,585 701.3,582.7 704.8,580.1 708.3,576.8 711.8,573.5 715.3,571.1 718.8,568.7 722.3,563.9 725.8,558.1 729.3,553.1 732.8,548.2 736.3,543.3 739.8,538.1 743.3,533.1 746.8,529 750.3,525.5 753.8,522.3 757.3,519.3 760.8,516.5 764.3,513.9 766.7,512.3" fill="none" stroke="#00ffff" stroke-width="1" />
<polyline points="81.8,517.3 85.3,522.2 88.8,526.8 92.3,531.1 95.8,535 99.3,538.6 102.8,542.1 106.3,545.2 109.8,547.3 113.3,548.7 116.8,550 120.3,550.8 123.8,551 127.3,550.5 130.8,549.6 134.3,548.5 137.8,547 141.3,545.1 144.8,543.2 148.3,541.3 151.8,539.1 155.3,536 158.8,531.5 162.3,527.1 165.8,523.4 169.3,520 172.8,517.8 176.3,516.4 179.8,515.3 183.3,514.5 186.8,514.1 190.3,513.9 193.8,513.2 197.3,511 200.8,508.1 204.3,504.7 207.8,500.8 211.3,496.7 214.8,492.3 218.3,487.8 221.8,483.8 225.3,479.9 228.8,475.8 232.3,471.1 235.8,466.4 239.3,462.1 242.8,458.3 246.3,454.6 249.8,450.3 253.3,445.5 256.8,441 260.3,437.2 263.8,433.6 267.3,429.1 270.8,422.8 274.3,416.1 277.8,410.1 281.3,404.6 284.8,399 288.3,393.4 291.8,387.9 295.3,382.3 298.8,376.8 302.3,371.8 305.8,367.3 309.3,363.6 312.8,360.6 316.3,357.9 319.8,355.1 323.3,351.9 326.8,348.7 330.3,345.7 333.8,343.3 337.3,341 340.8,338.9 344.3,337.7 347.8,337.8 351.3,338.5 354.8,339.7 358.3,340.9 361.8,342.4 365.3,344.3 368.8,346.4 372.3,349 375.8,352.2 379.3,355.5 382.8,358.8 386.3,361.9 389.8,365.1 393.3,368.3 396.8,371.2 400.3,373.8 403.8,376.1 407.3,378.3 410.8,380.4 414.3,382.3 417.8,383.8 421.3,385.7 424.8,389.3 428.3,394.3 431.8,399.9 435.3,405.2 438.8,410 442.3,414.6 445.8,419.3 449.3,424 452.8,428.7 456.3,433.3 459.8,438 463.3,442.5 466.8,447 470.3,451.8 473.8,456.9 477.3,462.3 480.8,467.8 484.3,473.5 487.8,479.4 491.3,485.3 494.8,490.8 498.3,496.2 501.8,501.3 505.3,505.9 508.8,510.2 512.3,514.2 515.8,518.2 519.3,522.5 522.8,526.7 526.3,530.4 529.8,533.5 533.3,536.3 536.8,539.2 540.3,542.5 543.8,546.2 547.3,550.2 550.8,554.7 554.3,559.7 557.8,565.1 561.3,571.4 564.8,577.9 568.3,584 571.8,589.8 575.3,595.1 578.8,599.7 582.3,603.8 585.8,607.7 589.3,611.4 592.8,614.8 596.3,617.5 599.8,619.7 603.3,621.5 606.8,623.2 610.3,624.8 613.8,625.7 617.3,626.2 620.8,626.5 624.3,626.2 627.8,624.1 631.3,621.4 634.8,618 638.3,614.8 641.8,611.6 645.3,609.5 648.8,607.9 652.3,605.9 655.8,603.2 659.3,600.4 662.8,597.5 666.3,595.4 669.8,594.2 673.3,593.6 676.8,593.8 680.3,594.2 683.8,594.5 687.3,594.3 690.8,593.6 694.3,592.6 697.8,591 701.3,588.7 704.8,586.1 708.3,582.8 711.8,579.5 715.3,577.1 718.8,574.7 722.3,569.9 725.8,564.1 729.3,559.1 732.8,554.2 736.3,549.3 739.8,544.1 743.3,539.1 746.8,535 750.3,531.5 753.8,528.3 757.3,525.3 760.8,522.5 764.3,519.9 766.7,518.3" fill="none" stroke="#00ffff" stroke-width="1" />
<polyline points="81.8,514.3 85.3,519.2 88.8,523.8 92.3,528.1 95.8,532 99.3,535.6 102.8,539.1 106.3,542.2 109.8,544.3 113.3,545.7 116.8,547 120.3,547.8 123.8,548 127.3,547.5 130.8,546.6 134.3,545.5 137.8,544 141.3,542.1 144.8,540.2 148.3,538.3 151.8,536.1 155.3,533 158.8,528.5 162.3,524.1 165.8,520.4 169.3,517 172.8,514.8 176.3,513.4 179.8,512.3 183.3,511.5 186.8,511.1 190.3,510.9 193.8,510.2 197.3,508 200.8,505.1 204.3,501.7 207.8,497.8 211.3,493.7 214.8,489.3 218.3,484.8 221.8,480.8 225.3,476.9 228.8,472.8 232.3,468.1 235.8,463.4 239.3,459.1 242.8,455.3 246.3,451.6 249.8,447.3 253.3,442.5 256.8,438 260.3,434.2 263.8,430.6 267.3,426.1 270.8,419.8 274.3,413.1 277.8,407.1 281.3,401.6 284.8,396 288.3,390.4 291.8,384.9 295.3,379.3 298.8,373.8 302.3,368.8 305.8,364.3 309.3,360.6 312.8,357.6 316.3,354.9 319.8,352.1 323.3,348.9 326.8,345.7 330.3,342.7 333.8,340.3 337.3,338 340.8,335.9 344.3,334.7 347.8,334.8 351.3,335.5 354.8,336.7 358.3,337.9 361.8,339.4 365.3,341.3 368.8,343.4 372.3,346 375.8,349.2 379.3,352.5 382.8,355.8 386.3,358.9 389.8,362.1 393.3,365.3 396.8,368.2 400.3,370.8 403.8,373.1 407.3,375.3 410.8,377.4 414.3,379.3 417.8,380.8 421.3,382.7 424.8,386.3 428.3,391.3 431.8,396.9 435.3,402.2 438.8,407 442.3,411.6 445.8,416.3 449.3,421 452.8,425.7 456.3,430.3 459.8,435 463.3,439.5 466.8,444 470.3,448.8 473.8,453.9 477.3,459.3 480.8,464.8 484.3,470.5 487.8,476.4 491.3,482.3 494.8,487.8 498.3,493.2 501.8,498.3 505.3,502.9 508.8,507.2 512.3,511.2 515.8,515.2 519.3,519.5 522.8,523.7 526.3,527.4 529.8,530.5 533.3,533.3 536.8,536.2 540.3,539.5 543.8,543.2 547.3,547.2 550.8,551.7 554.3,556.7 557.8,562.1 561.3,568.4 564.8,574.9 568.3,581 571.8,586.8 575.3,592.1 578.8,596.7 582.3,600.8 585.8,604.7 589.3,608.4 592.8,611.8 596.3,614.5 599.8,616.7 603.3,618.5 606.8,620.2 610.3,621.8 613.8,622.7 617.3,623.2 620.8,623.5 624.3,623.2 627.8,621.1 631.3,618.4 634.8,615 638.3,611.8 641.8,608.6 645.3,606.5 648.8,604.9 652.3,602.9 655.8,600.2 659.3,597.4 662.8,594.5 666.3,592.4 669.8,591.2 673.3,590.6 676.8,590.8 680.3,591.2 683.8,591.5 687.3,591.3 690.8,590.6 694.3,589.6 697.8,588 701.3,585.7 704.8,583.1 708.3,579.8 711.8,576.5 715.3,574.1 718.8,571.7 722.3,566.9 725.8,561.1 729.3,556.1 732.8,551.2 736.3,546.3 739.8,541.1 743.3,536.1 746.8,532 750.3,528.5 753.8,525.3 757.3,522.3 760.8,519.5 764.3,516.9 766.7,515.3" fill="none" stroke="#d8d820" stroke-width="2.6" />
<polyline points="81.8,514.3 85.3,519.2 88.8,523.8 92.3,528.1 95.8,532 99.3,535.6 102.8,539.1 106.3,542.2 109.8,544.3 113.3,545.7 116.8,547 120.3,547.8 123.8,548 127.3,547.5 130.8,546.6 134.3,545.5 137.8,544 141.3,542.1 144.8,540.2 148.3,538.3 151.8,536.1 155.3,533 158.8,528.5 162.3,524.1 165.8,520.4 169.3,517 172.8,514.8 176.3,513.4 179.8,512.3 183.3,511.5 186.8,511.1 190.3,510.9 193.8,510.2 197.3,508 200.8,505.1 204.3,501.7 207.8,497.8 211.3,493.7 214.8,489.3 218.3,484.8 221.8,480.8 225.3,476.9 228.8,472.8 232.3,468.1 235.8,463.4 239.3,459.1 242.8,455.3 246.3,451.6 249.8,447.3 253.3,442.5 256.8,438 260.3,434.2 263.8,430.6 267.3,426.1 270.8,419.8 274.3,413.1 277.8,407.1 281.3,401.6 284.8,396 288.3,390.4 291.8,384.9 295.3,379.3 298.8,373.8 302.3,368.8 305.8,364.3 309.3,360.6 312.8,357.6 316.3,354.9 319.8,352.1 323.3,348.9 326.8,345.7 330.3,342.7 333.8,340.3 337.3,338 340.8,335.9 344.3,334.7 347.8,334.8 351.3,335.5 354.8,336.7 358.3,337.9 361.8,339.4 365.3,341.3 368.8,343.4 372.3,346 375.8,349.2 379.3,352.5 382.8,355.8 386.3,358.9 389.8,362.1 393.3,365.3 396.8,368.2 400.3,370.8 403.8,373.1 407.3,375.3 410.8,377.4 414.3,379.3 417.8,380.8 421.3,382.7 424.8,386.3 428.3,391.3 431.8,396.9 435.3,402.2 438.8,407 442.3,411.6 445.8,416.3 449.3,421 452.8,425.7 456.3,430.3 459.8,435 463.3,439.5 466.8,444 470.3,448.8 473.8,453.9 477.3,459.3 480.8,464.8 484.3,470.5 487.8,476.4 491.3,482.3 494.8,487.8 498.3,493.2 501.8,498.3 505.3,502.9 508.8,507.2 512.3,511.2 515.8,515.2 519.3,519.5 522.8,523.7 526.3,527.4 529.8,530.5 533.3,533.3 536.8,536.2 540.3,539.5 543.8,543.2 547.3,547.2 550.8,551.7 554.3,556.7 557.8,562.1 561.3,568.4 564.8,574.9 568.3,581 571.8,586.8 575.3,592.1 578.8,596.7 582.3,600.8 585.8,604.7 589.3,608.4 592.8,611.8 596.3,614.5 599.8,616.7 603.3,618.5 606.8,620.2 610.3,621.8 613.8,622.7 617.3,623.2 620.8,623.5 624.3,623.2 627.8,621.1 631.3,618.4 634.8,615 638.3,611.8 641.8,608.6 645.3,606.5 648.8,604.9 652.3,602.9 655.8,600.2 659.3,597.4 662.8,594.5 666.3,592.4 669.8,591.2 673.3,590.6 676.8,590.8 680.3,591.2 683.8,591.5 687.3,591.3 690.8,590.6 694.3,589.6 697.8,588 701.3,585.7 704.8,583.1 708.3,579.8 711.8,576.5 715.3,574.1 718.8,571.7 722.3,566.9 725.8,561.1 729.3,556.1 732.8,551.2 736.3,546.3 739.8,541.1 743.3,536.1 746.8,532 750.3,528.5 753.8,525.3 757.3,522.3 760.8,519.5 764.3,516.9 766.7,515.3" fill="none" stroke="#707000" stroke-width="1.1" />
<polyline points="80.8,536 84.3,535.7 87.8,534.7 91.3,532.3 94.8,526.2 98.3,520.8 101.8,515.3 105.3,511 108.8,509.8 112.3,512.2 115.8,515.6 119.3,519.5 122.8,524 126.3,527.8 129.8,531.7 133.3,534.9 136.8,536 140.3,534.8 143.8,532.5 147.3,529.5 150.8,525 154.3,519 157.8,508.5 161.3,496.7 164.8,487.3 168.3,478.5 171.8,473.1 175.3,471.5 178.8,470.5 182.3,469.1 185.8,468.5 189.3,470.9 192.8,473 196.3,466.9 199.8,455.7 203.3,444.7 206.8,432.5 210.3,421.7 213.8,411.9 217.3,404.4 220.8,399.3 224.3,396 227.8,395.2 231.3,391 234.8,384.7 238.3,381.3 241.8,377.9 245.3,373.3 248.8,368.6 252.3,365 255.8,361.9 259.3,359.1 262.8,356.6 266.3,353.3 269.8,347.7 273.3,340.1 276.8,331.7 280.3,321.6 283.8,311.4 287.3,302.9 290.8,294.9 294.3,289.6 297.8,286.8 301.3,284.9 304.8,284.4 308.3,284.4 311.8,284.6 315.3,289 318.8,296 322.3,304.1 325.8,313.5 329.3,321.6 332.8,328.7 336.3,333 339.8,336 343.3,335.4 346.8,331 350.3,342 353.8,355.9 357.3,369.6 360.8,380.2 364.3,390.6 367.8,399.4 371.3,407.6 374.8,415.9 378.3,424.3 381.8,432.8 385.3,441.2 388.8,449.1 392.3,455.1 395.8,457.9 399.3,456.7 402.8,454.2 406.3,450.7 409.8,445.2 413.3,438.4 416.8,427.9 420.3,416.3 423.8,413.2 427.3,419.5 430.8,427.8 434.3,436.5 437.8,445.5 441.3,453.7 444.8,461.4 448.3,468.4 451.8,474.3 455.3,477.7 458.8,479.9 462.3,483.7 465.8,489.9 469.3,497.8 472.8,508.3 476.3,519.8 479.8,531.6 483.3,544.8 486.8,560.9 490.3,573 493.8,583 497.3,592.5 500.8,599.3 504.3,598.5 507.8,597.3 511.3,602.9 514.8,613.4 518.3,623.6 521.8,628.8 525.3,628.2 528.8,626.7 532.3,617.6 535.8,604.4 539.3,593.7 542.8,588.5 546.3,585.6 549.8,587 553.3,592.8 556.8,602.6 560.3,613.9 563.8,624.5 567.3,632.2 570.8,638.4 574.3,644.5 577.8,646.5 581.3,643.4 584.8,643.8 588.3,646.7 591.8,642.5 595.3,636.3 598.8,630.6 602.3,625.4 605.8,622.1 609.3,619.7 612.8,619.3 616.3,619.8 619.8,620.2 623.3,614.2 626.8,603.8 630.3,589.4 633.8,575.6 637.3,564.4 640.8,558.6 644.3,554.8 647.8,552.7 651.3,551.2 654.8,546.6 658.3,536.1 661.8,529.4 665.3,525.4 668.8,523.7 672.3,523.1 675.8,523 679.3,528.1 682.8,536.6 686.3,546.7 689.8,553.7 693.3,557.5 696.8,558.7 700.3,557.6 703.8,555.8 707.3,552.2 710.8,548.6 714.3,547.4 717.8,545.3 721.3,535.4 724.8,522.4 728.3,506.7 731.8,492.2 735.3,482.3 738.8,475.2 742.3,471.6 745.8,469.5 749.3,468.3 752.8,467.3 756.3,466.5 759.8,465.7 763.3,465 766.7,464.4" fill="none" stroke="#ff00ff" stroke-width="1" />
<polyline points="80.8,545.2 84.3,544.9 87.8,543.9 91.3,541.5 94.8,535.4 98.3,530 101.8,524.5 105.3,520.2 108.8,519 112.3,521.4 115.8,524.8 119.3,528.7 122.8,533.2 126.3,537 129.8,540.9 133.3,544.1 136.8,545.2 140.3,544 143.8,541.7 147.3,538.7 150.8,534.2 154.3,528.2 157.8,517.7 161.3,505.9 164.8,496.5 168.3,487.7 171.8,482.3 175.3,480.7 178.8,479.7 182.3,478.3 185.8,477.7 189.3,480.1 192.8,482.2 196.3,476.1 199.8,464.9 203.3,453.9 206.8,441.7 210.3,430.9 213.8,421.1 217.3,413.6 220.8,408.5 224.3,405.2 227.8,404.4 231.3,400.2 234.8,393.9 238.3,390.5 241.8,387.1 245.3,382.5 248.8,377.8 252.3,374.2 255.8,371.1 259.3,368.3 262.8,365.8 266.3,362.5 269.8,356.9 273.3,349.3 276.8,340.9 280.3,330.8 283.8,320.6 287.3,312.1 290.8,304.1 294.3,298.8 297.8,296 301.3,294.1 304.8,293.6 308.3,293.6 311.8,293.8 315.3,298.2 318.8,305.2 322.3,313.3 325.8,322.7 329.3,330.8 332.8,337.9 336.3,342.2 339.8,345.2 343.3,344.6 346.8,340.2 350.3,351.2 353.8,365.1 357.3,378.8 360.8,389.4 364.3,399.8 367.8,408.6 371.3,416.8 374.8,425.1 378.3,433.5 381.8,442 385.3,450.4 388.8,458.3 392.3,464.3 395.8,467.1 399.3,465.9 402.8,463.4 406.3,459.9 409.8,454.4 413.3,447.6 416.8,437.1 420.3,425.5 423.8,422.4 427.3,428.7 430.8,437 434.3,445.7 437.8,454.7 441.3,462.9 444.8,470.6 448.3,477.6 451.8,483.5 455.3,486.9 458.8,489.1 462.3,492.9 465.8,499.1 469.3,507 472.8,517.5 476.3,529 479.8,540.8 483.3,554 486.8,570.1 490.3,582.2 493.8,592.2 497.3,601.7 500.8,608.5 504.3,607.7 507.8,606.5 511.3,612.1 514.8,622.6 518.3,632.8 521.8,638 525.3,637.4 528.8,635.9 532.3,626.8 535.8,613.6 539.3,602.9 542.8,597.7 546.3,594.8 549.8,596.2 553.3,602 556.8,611.8 560.3,623.1 563.8,633.7 567.3,641.4 570.8,647.6 574.3,653.7 577.8,655.7 581.3,652.6 584.8,653 588.3,655.9 591.8,651.7 595.3,645.5 598.8,639.8 602.3,634.6 605.8,631.3 609.3,628.9 612.8,628.5 616.3,629 619.8,629.4 623.3,623.4 626.8,613 630.3,598.6 633.8,584.8 637.3,573.6 640.8,567.8 644.3,564 647.8,561.9 651.3,560.4 654.8,555.8 658.3,545.3 661.8,538.6 665.3,534.6 668.8,532.9 672.3,532.3 675.8,532.2 679.3,537.3 682.8,545.8 686.3,555.9 689.8,562.9 693.3,566.7 696.8,567.9 700.3,566.8 703.8,565 707.3,561.4 710.8,557.8 714.3,556.6 717.8,554.5 721.3,544.6 724.8,531.6 728.3,515.9 731.8,501.4 735.3,491.5 738.8,484.4 742.3,480.8 745.8,478.7 749.3,477.5 752.8,476.5 756.3,475.7 759.8,474.9 763.3,474.2 766.7,473.6" fill="none" stroke="#ff00ff" stroke-width="1" />
<polyline points="80.8,540.6 84.3,540.3 87.8,539.3 91.3,536.9 94.8,530.8 98.3,525.4 101.8,519.9 105.3,515.6 108.8,514.4 112.3,516.8 115.8,520.2 119.3,524.1 122.8,528.6 126.3,532.4 129.8,536.3 133.3,539.5 136.8,540.6 140.3,539.4 143.8,537.1 147.3,534.1 150.8,529.6 154.3,523.6 157.8,513.1 161.3,501.3 164.8,491.9 168.3,483.1 171.8,477.7 175.3,476.1 178.8,475.1 182.3,473.7 185.8,473.1 189.3,475.5 192.8,477.6 196.3,471.5 199.8,460.3 203.3,449.3 206.8,437.1 210.3,426.3 213.8,416.5 217.3,409 220.8,403.9 224.3,400.6 227.8,399.8 231.3,395.6 234.8,389.3 238.3,385.9 241.8,382.5 245.3,377.9 248.8,373.2 252.3,369.6 255.8,366.5 259.3,363.7 262.8,361.2 266.3,357.9 269.8,352.3 273.3,344.7 276.8,336.3 280.3,326.2 283.8,316 287.3,307.5 290.8,299.5 294.3,294.2 297.8,291.4 301.3,289.5 304.8,289 308.3,289 311.8,289.2 315.3,293.6 318.8,300.6 322.3,308.7 325.8,318.1 329.3,326.2 332.8,333.3 336.3,337.6 339.8,340.6 343.3,340 346.8,335.6 350.3,346.6 353.8,360.5 357.3,374.2 360.8,384.8 364.3,395.2 367.8,404 371.3,412.2 374.8,420.5 378.3,428.9 381.8,437.4 385.3,445.8 388.8,453.7 392.3,459.7 395.8,462.5 399.3,461.3 402.8,458.8 406.3,455.3 409.8,449.8 413.3,443 416.8,432.5 420.3,420.9 423.8,417.8 427.3,424.1 430.8,432.4 434.3,441.1 437.8,450.1 441.3,458.3 444.8,466 448.3,473 451.8,478.9 455.3,482.3 458.8,484.5 462.3,488.3 465.8,494.5 469.3,502.4 472.8,512.9 476.3,524.4 479.8,536.2 483.3,549.4 486.8,565.5 490.3,577.6 493.8,587.6 497.3,597.1 500.8,603.9 504.3,603.1 507.8,601.9 511.3,607.5 514.8,618 518.3,628.2 521.8,633.4 525.3,632.8 528.8,631.3 532.3,622.2 535.8,609 539.3,598.3 542.8,593.1 546.3,590.2 549.8,591.6 553.3,597.4 556.8,607.2 560.3,618.5 563.8,629.1 567.3,636.8 570.8,643 574.3,649.1 577.8,651.1 581.3,648 584.8,648.4 588.3,651.3 591.8,647.1 595.3,640.9 598.8,635.2 602.3,630 605.8,626.7 609.3,624.3 612.8,623.9 616.3,624.4 619.8,624.8 623.3,618.8 626.8,608.4 630.3,594 633.8,580.2 637.3,569 640.8,563.2 644.3,559.4 647.8,557.3 651.3,555.8 654.8,551.2 658.3,540.7 661.8,534 665.3,530 668.8,528.3 672.3,527.7 675.8,527.6 679.3,532.7 682.8,541.2 686.3,551.3 689.8,558.3 693.3,562.1 696.8,563.3 700.3,562.2 703.8,560.4 707.3,556.8 710.8,553.2 714.3,552 717.8,549.9 721.3,540 724.8,527 728.3,511.3 731.8,496.8 735.3,486.9 738.8,479.8 742.3,476.2 745.8,474.1 749.3,472.9 752.8,471.9 756.3,471.1 759.8,470.3 763.3,469.6 766.7,469" fill="none" stroke="#00e000" stroke-width="1" />
<polyline points="80.8,426.8 84.3,428.4 87.8,430 91.3,431.7 94.8,433.3 98.3,435 101.8,436.8 105.3,438.5 108.8,440.3 112.3,442.1 115.8,443.8 119.3,445.6 122.8,447.5 126.3,449.3 129.8,451 133.3,452.5 136.8,453.8 140.3,455.1 143.8,456.2 147.3,457.1 150.8,457.5 154.3,457.9 157.8,458.2 161.3,458.4 164.8,458.5 168.3,458.5 171.8,458.6 175.3,458.7 178.8,458.7 182.3,458.8 185.8,458.8 189.3,458.8 192.8,458.7 196.3,458.4 199.8,457.7 203.3,456.8 206.8,455.8 210.3,454.9 213.8,453.7 217.3,452.4 220.8,450.9 224.3,449.4 227.8,447.8 231.3,446.3 234.8,444.8 238.3,443.2 241.8,441.6 245.3,440 248.8,438.4 252.3,436.9 255.8,435.4 259.3,433.9 262.8,432.3 266.3,430.4 269.8,428.4 273.3,426 276.8,423.5 280.3,420.9 283.8,418.3 287.3,415.7 290.8,412.8 294.3,409.9 297.8,407.2 301.3,404.9 304.8,403.1 308.3,401.8 311.8,400.7 315.3,399.7 318.8,398.5 322.3,397.2 325.8,396 329.3,395.1 332.8,394.2 336.3,393.4 339.8,392.8 343.3,392.4 346.8,392.3 350.3,392.5 353.8,392.8 357.3,393.2 360.8,393.9 364.3,394.8 367.8,395.9 371.3,397 374.8,398.5 378.3,400.2 381.8,401.7 385.3,403 388.8,404.4 392.3,405.7 395.8,406.8 399.3,407.6 402.8,408.1 406.3,408.3 409.8,408.4 413.3,408.5 416.8,408.7 420.3,408.9 423.8,409.1 427.3,409.5 430.8,409.9 434.3,410.5 437.8,411.3 441.3,413 444.8,415.1 448.3,417 451.8,418.4 455.3,419.6 458.8,420.8 462.3,422.2 465.8,423.8 469.3,425.8 472.8,428.1 476.3,430.7 479.8,433.6 483.3,437 486.8,440.7 490.3,444.3 493.8,447.6 497.3,450.9 500.8,454.1 504.3,457.4 507.8,460.6 511.3,463.9 514.8,467 518.3,470.2 521.8,473.5 525.3,476.5 528.8,478.9 532.3,480.6 535.8,482.2 539.3,484 542.8,486 546.3,488.3 549.8,490.7 553.3,493.5 556.8,496.5 560.3,499.6 563.8,502.9 567.3,505.9 570.8,508.8 574.3,511.5 577.8,514.1 581.3,516.6 584.8,518.9 588.3,521.1 591.8,523.2 595.3,525.1 598.8,527 602.3,528.7 605.8,530.2 609.3,531.7 612.8,533 616.3,534.3 619.8,535.5 623.3,536 626.8,536.2 630.3,536.3 633.8,536.3 637.3,536.4 640.8,536.4 644.3,536.4 647.8,536.3 651.3,536.2 654.8,536 658.3,535.6 661.8,535 665.3,534.4 668.8,534 672.3,534.1 675.8,534.4 679.3,534.8 682.8,535.3 686.3,536.2 689.8,537.1 693.3,537.6 696.8,537.9 700.3,538.1 703.8,538.2 707.3,538.3 710.8,538.3 714.3,538.1 717.8,538 721.3,537.4 724.8,536.2 728.3,534.7 731.8,533.3 735.3,531.8 738.8,530.4 742.3,529 745.8,527.7 749.3,526.5 752.8,525.5 756.3,524.7 759.8,523.9 763.3,523.3 766.7,522.8" fill="none" stroke="#000" stroke-width="2.3" />
<rect x="80" y="536" width="1" height="44" fill="#ff0000"/>
<rect x="78.5" y="539.5" width="4" height="24" fill="#fff" stroke="#ff0000" stroke-width="1"/>
<rect x="87" y="535" width="1" height="51" fill="#ff0000"/>
<rect x="85.5" y="535.5" width="4" height="21" fill="#fff" stroke="#ff0000" stroke-width="1"/>
<rect x="94" y="513" width="1" height="35" fill="#000000"/>
<rect x="92.5" y="527.5" width="4" height="7" fill="#fff" stroke="#000000" stroke-width="1"/>
<rect x="101" y="491" width="1" height="29" fill="#000000"/>
<rect x="99.5" y="495.5" width="4" height="24" fill="#fff" stroke="#000000" stroke-width="1"/>
<rect x="108" y="486" width="1" height="28" fill="#000000"/>
<rect x="106.5" y="497.5" width="4" height="5" fill="#fff" stroke="#000000" stroke-width="1"/>
<rect x="115" y="508" width="1" height="18" fill="#000000"/>
<rect x="113" y="508" width="5" height="14" fill="#000000"/>
<rect x="122" y="512" width="1" height="40" fill="#000000"/>
<rect x="120" y="524" width="5" height="19" fill="#000000"/>
<rect x="129" y="536" width="1" height="40" fill="#ff0000"/>
<rect x="127.5" y="552.5" width="4" height="12" fill="#fff" stroke="#ff0000" stroke-width="1"/>
<rect x="136" y="555" width="1" height="42" fill="#ff0000"/>
<rect x="134.5" y="558.5" width="4" height="15" fill="#fff" stroke="#ff0000" stroke-width="1"/>
<rect x="143" y="517" width="1" height="26" fill="#000000"/>
<rect x="141.5" y="517.5" width="4" height="25" fill="#fff" stroke="#000000" stroke-width="1"/>
<rect x="150" y="495" width="1" height="48" fill="#000000"/>
<rect x="148" y="506" width="5" height="30" fill="#000000"/>
<rect x="157" y="474" width="1" height="45" fill="#000000"/>
<rect x="155.5" y="476.5" width="4" height="42" fill="#fff" stroke="#000000" stroke-width="1"/>
<rect x="164" y="455" width="1" height="29" fill="#000000"/>
<rect x="162.5" y="463.5" width="4" height="13" fill="#fff" stroke="#000000" stroke-width="1"/>
<rect x="171" y="441" width="1" height="40" fill="#000000"/>
<rect x="169.5" y="441.5" width="4" height="23" fill="#fff" stroke="#000000" stroke-width="1"/>
<rect x="178" y="433" width="1" height="42" fill="#0000ff"/>
<rect x="176" y="441" width="5" height="21" fill="#0000ff"/>
<rect x="185" y="454" width="1" height="18" fill="#000000"/>
<rect x="183.5" y="459.5" width="4" height="1" fill="#fff" stroke="#000000" stroke-width="1"/>
<rect x="192" y="467" width="1" height="24" fill="#000000"/>
<rect x="190" y="467" width="5" height="18" fill="#000000"/>
<rect x="199" y="418" width="1" height="50" fill="#0000ff"/>
<rect x="197.5" y="427.5" width="4" height="40" fill="#fff" stroke="#0000ff" stroke-width="1"/>
<rect x="206" y="396" width="1" height="49" fill="#0000ff"/>
<rect x="204.5" y="399.5" width="4" height="25" fill="#fff" stroke="#0000ff" stroke-width="1"/>
<rect x="213" y="361" width="1" height="34" fill="#0000ff"/>
<rect x="211.5" y="367.5" width="4" height="23" fill="#fff" stroke="#0000ff" stroke-width="1"/>
<rect x="220" y="359" width="1" height="27" fill="#0000ff"/>
<rect x="218.5" y="373.5" width="4" height="3" fill="#fff" stroke="#0000ff" stroke-width="1"/>
<rect x="227" y="361" width="1" height="34" fill="#0000ff"/>
<rect x="225" y="381" width="5" height="8" fill="#0000ff"/>
<rect x="234" y="346" width="1" height="34" fill="#0000ff"/>
<rect x="232.5" y="353.5" width="4" height="26" fill="#fff" stroke="#0000ff" stroke-width="1"/>
<rect x="241" y="349" width="1" height="15" fill="#0000ff"/>
<rect x="239" y="353" width="5" height="2" fill="#0000ff"/>
<rect x="248" y="355" width="1" height="25" fill="#0000ff"/>
<rect x="246.5" y="358.5" width="4" height="16" fill="#fff" stroke="#0000ff" stroke-width="1"/>
<rect x="255" y="335" width="1" height="33" fill="#0000ff"/>
<rect x="253" y="353" width="5" height="8" fill="#0000ff"/>
<rect x="262" y="363" width="1" height="14" fill="#0000ff"/>
<rect x="260" y="365" width="5" height="6" fill="#0000ff"/>
<rect x="269" y="321" width="1" height="19" fill="#0000ff"/>
<rect x="267.5" y="322.5" width="4" height="15" fill="#fff" stroke="#0000ff" stroke-width="1"/>
<rect x="276" y="295" width="1" height="32" fill="#0000ff"/>
<rect x="274" y="312" width="5" height="11" fill="#0000ff"/>
<rect x="283" y="282" width="1" height="34" fill="#0000ff"/>
<rect x="281.5" y="282.5" width="4" height="30" fill="#fff" stroke="#0000ff" stroke-width="1"/>
<rect x="290" y="270" width="1" height="26" fill="#0000ff"/>
<rect x="288.5" y="272.5" width="4" height="15" fill="#fff" stroke="#0000ff" stroke-width="1"/>
<rect x="297" y="257" width="1" height="27" fill="#0000ff"/>
<rect x="295.5" y="268.5" width="4" height="7" fill="#fff" stroke="#0000ff" stroke-width="1"/>
<rect x="304" y="270" width="1" height="27" fill="#0000ff"/>
<rect x="302" y="282" width="5" height="3" fill="#0000ff"/>
<rect x="311" y="275" width="1" height="18" fill="#0000ff"/>
<rect x="309.5" y="280.5" width="4" height="5" fill="#fff" stroke="#0000ff" stroke-width="1"/>
<rect x="318" y="290" width="1" height="27" fill="#0000ff"/>
<rect x="316" y="290" width="5" height="21" fill="#0000ff"/>
<rect x="325" y="330" width="1" height="37" fill="#0000ff"/>
<rect x="323" y="330" width="5" height="33" fill="#0000ff"/>
<rect x="332" y="350" width="1" height="20" fill="#0000ff"/>
<rect x="330" y="365" width="5" height="3" fill="#0000ff"/>
<rect x="339" y="352" width="1" height="21" fill="#0000ff"/>
<rect x="337.5" y="361.5" width="4" height="7" fill="#fff" stroke="#0000ff" stroke-width="1"/>
<rect x="346" y="327" width="1" height="30" fill="#0000ff"/>
<rect x="344.5" y="328.5" width="4" height="25" fill="#fff" stroke="#0000ff" stroke-width="1"/>
<rect x="353" y="326" width="1" height="82" fill="#0000ff"/>
<rect x="351" y="328" width="5" height="80" fill="#0000ff"/>
<rect x="360" y="405" width="1" height="25" fill="#000000"/>
<rect x="358" y="421" width="5" height="2" fill="#000000"/>
<rect x="367" y="415" width="1" height="45" fill="#000000"/>
<rect x="365" y="417" width="5" height="31" fill="#000000"/>
<rect x="374" y="432" width="1" height="34" fill="#000000"/>
<rect x="372" y="440" width="5" height="25" fill="#000000"/>
<rect x="381" y="457" width="1" height="38" fill="#ff0000"/>
<rect x="379.5" y="459.5" width="4" height="16" fill="#fff" stroke="#ff0000" stroke-width="1"/>
<rect x="388" y="430" width="1" height="63" fill="#ff0000"/>
<rect x="386" y="443" width="5" height="40" fill="#ff0000"/>
<rect x="395" y="473" width="1" height="31" fill="#ff0000"/>
<rect x="393" y="479" width="5" height="13" fill="#ff0000"/>
<rect x="402" y="447" width="1" height="46" fill="#ff0000"/>
<rect x="400.5" y="452.5" width="4" height="38" fill="#fff" stroke="#ff0000" stroke-width="1"/>
<rect x="409" y="434" width="1" height="38" fill="#ff0000"/>
<rect x="407.5" y="437.5" width="4" height="25" fill="#fff" stroke="#ff0000" stroke-width="1"/>
<rect x="416" y="397" width="1" height="31" fill="#ff0000"/>
<rect x="414.5" y="402.5" width="4" height="25" fill="#fff" stroke="#ff0000" stroke-width="1"/>
<rect x="423" y="373" width="1" height="20" fill="#000000"/>
<rect x="421.5" y="378.5" width="4" height="14" fill="#fff" stroke="#000000" stroke-width="1"/>
<rect x="430" y="419" width="1" height="66" fill="#ff0000"/>
<rect x="428" y="419" width="5" height="59" fill="#ff0000"/>
<rect x="437" y="462" width="1" height="28" fill="#ff0000"/>
<rect x="435.5" y="470.5" width="4" height="3" fill="#fff" stroke="#ff0000" stroke-width="1"/>
<rect x="444" y="463" width="1" height="40" fill="#ff0000"/>
<rect x="442" y="478" width="5" height="18" fill="#ff0000"/>
<rect x="451" y="508" width="1" height="24" fill="#ff0000"/>
<rect x="449" y="508" width="5" height="4" fill="#ff0000"/>
<rect x="458" y="496" width="1" height="35" fill="#ff0000"/>
<rect x="456.5" y="497.5" width="4" height="27" fill="#fff" stroke="#ff0000" stroke-width="1"/>
<rect x="465" y="510" width="1" height="28" fill="#ff0000"/>
<rect x="463" y="510" width="5" height="12" fill="#ff0000"/>
<rect x="472" y="492" width="1" height="67" fill="#ff0000"/>
<rect x="470" y="513" width="5" height="46" fill="#ff0000"/>
<rect x="479" y="558" width="1" height="24" fill="#ff0000"/>
<rect x="477" y="563" width="5" height="14" fill="#ff0000"/>
<rect x="486" y="594" width="1" height="45" fill="#ff0000"/>
<rect x="484" y="594" width="5" height="19" fill="#ff0000"/>
<rect x="493" y="601" width="1" height="40" fill="#ff0000"/>
<rect x="491" y="619" width="5" height="16" fill="#ff0000"/>
<rect x="500" y="600" width="1" height="53" fill="#ff0000"/>
<rect x="498" y="617" width="5" height="22" fill="#ff0000"/>
<rect x="507" y="589" width="1" height="54" fill="#ff0000"/>
<rect x="505.5" y="598.5" width="4" height="38" fill="#fff" stroke="#ff0000" stroke-width="1"/>
<rect x="514" y="617" width="1" height="43" fill="#ff0000"/>
<rect x="512" y="617" width="5" height="26" fill="#ff0000"/>
<rect x="521" y="626" width="1" height="49" fill="#ff0000"/>
<rect x="519" y="647" width="5" height="27" fill="#ff0000"/>
<rect x="528" y="610" width="1" height="53" fill="#ff0000"/>
<rect x="526.5" y="622.5" width="4" height="38" fill="#fff" stroke="#ff0000" stroke-width="1"/>
<rect x="535" y="558" width="1" height="37" fill="#ff0000"/>
<rect x="533.5" y="558.5" width="4" height="36" fill="#fff" stroke="#ff0000" stroke-width="1"/>
<rect x="542" y="549" width="1" height="48" fill="#ff0000"/>
<rect x="540.5" y="562.5" width="4" height="16" fill="#fff" stroke="#ff0000" stroke-width="1"/>
<rect x="549" y="554" width="1" height="33" fill="#ff0000"/>
<rect x="547" y="569" width="5" height="15" fill="#ff0000"/>
<rect x="556" y="606" width="1" height="48" fill="#ff0000"/>
<rect x="554" y="606" width="5" height="38" fill="#ff0000"/>
<rect x="563" y="636" width="1" height="36" fill="#ff0000"/>
<rect x="561" y="639" width="5" height="20" fill="#ff0000"/>
<rect x="570" y="643" width="1" height="41" fill="#ff0000"/>
<rect x="568" y="668" width="5" height="4" fill="#ff0000"/>
<rect x="577" y="661" width="1" height="20" fill="#ff0000"/>
<rect x="575" y="671" width="5" height="8" fill="#ff0000"/>
<rect x="584" y="618" width="1" height="109" fill="#ff0000"/>
<rect x="582.5" y="627.5" width="4" height="83" fill="#fff" stroke="#ff0000" stroke-width="1"/>
<rect x="591" y="602" width="1" height="75" fill="#ff0000"/>
<rect x="589" y="615" width="5" height="60" fill="#ff0000"/>
<rect x="598" y="615" width="1" height="29" fill="#ff0000"/>
<rect x="596.5" y="622.5" width="4" height="21" fill="#fff" stroke="#ff0000" stroke-width="1"/>
<rect x="605" y="574" width="1" height="43" fill="#ff0000"/>
<rect x="603" y="583" width="5" height="15" fill="#ff0000"/>
<rect x="612" y="593" width="1" height="35" fill="#ff0000"/>
<rect x="610" y="608" width="5" height="4" fill="#ff0000"/>
<rect x="619" y="589" width="1" height="45" fill="#ff0000"/>
<rect x="617" y="615" width="5" height="14" fill="#ff0000"/>
<rect x="626" y="577" width="1" height="62" fill="#ff0000"/>
<rect x="624.5" y="580.5" width="4" height="52" fill="#fff" stroke="#ff0000" stroke-width="1"/>
<rect x="633" y="547" width="1" height="39" fill="#000000"/>
<rect x="631.5" y="554.5" width="4" height="19" fill="#fff" stroke="#000000" stroke-width="1"/>
<rect x="640" y="518" width="1" height="35" fill="#000000"/>
<rect x="638.5" y="520.5" width="4" height="32" fill="#fff" stroke="#000000" stroke-width="1"/>
<rect x="647" y="504" width="1" height="35" fill="#0000ff"/>
<rect x="645.5" y="536.5" width="4" height="2" fill="#fff" stroke="#0000ff" stroke-width="1"/>
<rect x="654" y="520" width="1" height="31" fill="#000000"/>
<rect x="652" y="534" width="5" height="15" fill="#000000"/>
<rect x="661" y="494" width="1" height="54" fill="#0000ff"/>
<rect x="659.5" y="496.5" width="4" height="51" fill="#fff" stroke="#0000ff" stroke-width="1"/>
<rect x="668" y="500" width="1" height="17" fill="#0000ff"/>
<rect x="666" y="507" width="5" height="6" fill="#0000ff"/>
<rect x="675" y="490" width="1" height="39" fill="#0000ff"/>
<rect x="673" y="496" width="5" height="25" fill="#0000ff"/>
<rect x="682" y="500" width="1" height="76" fill="#0000ff"/>
<rect x="680" y="523" width="5" height="53" fill="#0000ff"/>
<rect x="689" y="581" width="1" height="29" fill="#000000"/>
<rect x="687" y="591" width="5" height="7" fill="#000000"/>
<rect x="696" y="555" width="1" height="50" fill="#000000"/>
<rect x="694.5" y="570.5" width="4" height="1" fill="#fff" stroke="#000000" stroke-width="1"/>
<rect x="703" y="545" width="1" height="28" fill="#000000"/>
<rect x="701.5" y="549.5" width="4" height="14" fill="#fff" stroke="#000000" stroke-width="1"/>
<rect x="710" y="520" width="1" height="41" fill="#000000"/>
<rect x="708.5" y="537.5" width="4" height="5" fill="#fff" stroke="#000000" stroke-width="1"/>
<rect x="717" y="543" width="1" height="41" fill="#000000"/>
<rect x="715" y="547" width="5" height="35" fill="#000000"/>
<rect x="724" y="464" width="1" height="56" fill="#0000ff"/>
<rect x="722.5" y="465.5" width="4" height="54" fill="#fff" stroke="#0000ff" stroke-width="1"/>
<rect x="731" y="439" width="1" height="33" fill="#0000ff"/>
<rect x="729.5" y="445.5" width="4" height="15" fill="#fff" stroke="#0000ff" stroke-width="1"/>
<rect x="738" y="435" width="1" height="30" fill="#0000ff"/>
<rect x="736" y="453" width="5" height="11" fill="#0000ff"/>
<rect x="745" y="424" width="1" height="43" fill="#0000ff"/>
<rect x="743" y="437" width="5" height="8" fill="#0000ff"/>
<rect x="752" y="450" width="1" height="21" fill="#0000ff"/>
<rect x="750" y="454" width="5" height="10" fill="#0000ff"/>
<rect x="759" y="466" width="1" height="27" fill="#0000ff"/>
<rect x="757.5" y="470.5" width="4" height="15" fill="#fff" stroke="#0000ff" stroke-width="1"/>
<rect x="766" y="452" width="1" height="25" fill="#0000ff"/>
<rect x="764" y="459" width="5" height="2" fill="#0000ff"/>
<path d="M114.7 448V473M105.7 452.5L114.7 473L123.7 452.5" fill="none" stroke="#808080" stroke-width="2" stroke-linejoin="miter"/>
<path d="M192.3 390.5V415.5M183.3 395L192.3 415.5L201.3 395" fill="none" stroke="#808080" stroke-width="2" stroke-linejoin="miter"/>
<path d="M317.8 208V233M308.8 212.5L317.8 233L326.8 212.5" fill="none" stroke="#808080" stroke-width="2" stroke-linejoin="miter"/>
<path d="M619 496.9V521.9M610 501.4L619 521.9L628 501.4" fill="none" stroke="#808080" stroke-width="2" stroke-linejoin="miter"/>
<path d="M682 453.5V478.5M673 458L682 478.5L691 458" fill="none" stroke="#808080" stroke-width="2" stroke-linejoin="miter"/>
<path d="M716.8 496.9V521.9M707.8 501.4L716.8 521.9L725.8 501.4" fill="none" stroke="#808080" stroke-width="2" stroke-linejoin="miter"/>
<path d="M129.2 494V519M120.2 498.5L129.2 519L138.2 498.5" fill="none" stroke="#ff0000" stroke-width="2" stroke-linejoin="miter"/>
<path d="M136.4 477V502M127.4 481.5L136.4 502L145.4 481.5" fill="none" stroke="#ff0000" stroke-width="2" stroke-linejoin="miter"/>
<path d="M325.3 265.4V290.4M316.3 269.9L325.3 290.4L334.3 269.9" fill="none" stroke="#ff0000" stroke-width="2" stroke-linejoin="miter"/>
<path d="M352.8 291.7V316.7M343.8 296.2L352.8 316.7L361.8 296.2" fill="none" stroke="#ff0000" stroke-width="2" stroke-linejoin="miter"/>
<path d="M430 327V352M421 331.5L430 352L439 331.5" fill="none" stroke="#ff0000" stroke-width="2" stroke-linejoin="miter"/>
<path d="M388 390.5V415.5M379 395L388 415.5L397 395" fill="none" stroke="#ff0000" stroke-width="2" stroke-linejoin="miter"/>
<path d="M514.4 554.5V579.5M505.4 559L514.4 579.5L523.4 559" fill="none" stroke="#ff0000" stroke-width="2" stroke-linejoin="miter"/>
<path d="M555.9 511V536M546.9 515.5L555.9 536L564.9 515.5" fill="none" stroke="#ff0000" stroke-width="2" stroke-linejoin="miter"/>
<path d="M591.3 551.5V576.5M582.3 556L591.3 576.5L600.3 556" fill="none" stroke="#ff0000" stroke-width="2" stroke-linejoin="miter"/>
<path d="M689.2 483.7V508.7M680.2 488.2L689.2 508.7L698.2 488.2" fill="none" stroke="#ff0000" stroke-width="2" stroke-linejoin="miter"/>
<path d="M716.8 455.5V480.5M707.8 460L716.8 480.5L725.8 460" fill="none" stroke="#ff0000" stroke-width="2" stroke-linejoin="miter"/>
<path d="M87 474V500M81 486.5L87 500L93 486.5" fill="none" stroke="#ff0000" stroke-width="1" stroke-linejoin="miter"/>
<path d="M122.6 479V505M116.6 491.5L122.6 505L128.6 491.5" fill="none" stroke="#ff0000" stroke-width="1" stroke-linejoin="miter"/>
<path d="M696.7 509V535M690.7 521.5L696.7 535L702.7 521.5" fill="none" stroke="#ff0000" stroke-width="1" stroke-linejoin="miter"/>
<path d="M76.5 487V513M70.5 499.5L76.5 513L82.5 499.5" fill="none" stroke="#ff0000" stroke-width="2" stroke-linejoin="miter"/>
<path d="M198.8 530.3V498.3M189.6 519.3L198.8 498.3L208 519.3" fill="none" stroke="#00ff00" stroke-width="2" stroke-linejoin="miter"/>
<path d="M143 619.6V587.6M133.8 608.6L143 587.6L152.2 608.6" fill="none" stroke="#00ff00" stroke-width="2" stroke-linejoin="miter"/>
<path d="M87 630V598M77.8 619L87 598L96.2 619" fill="none" stroke="#00ff00" stroke-width="2" stroke-linejoin="miter"/>
<path d="M80 633V601M70.8 622L80 601L89.2 622" fill="none" stroke="#00ff00" stroke-width="2" stroke-linejoin="miter"/>
<path d="M346 417.4V385.4M336.8 406.4L346 385.4L355.2 406.4" fill="none" stroke="#00ff00" stroke-width="2" stroke-linejoin="miter"/>
<path d="M402 534V502M392.8 523L402 502L411.2 523" fill="none" stroke="#00ff00" stroke-width="2" stroke-linejoin="miter"/>
<path d="M507 685.7V653.7M497.8 674.7L507 653.7L516.2 674.7" fill="none" stroke="#00ff00" stroke-width="2" stroke-linejoin="miter"/>
<path d="M528.3 714.2V682.2M519.1 703.2L528.3 682.2L537.5 703.2" fill="none" stroke="#00ff00" stroke-width="2" stroke-linejoin="miter"/>
<path d="M584.4 756.4V724.4M575.2 745.4L584.4 724.4L593.6 745.4" fill="none" stroke="#00ff00" stroke-width="2" stroke-linejoin="miter"/>
<path d="M597.8 724.9V692.9M588.6 713.9L597.8 692.9L607 713.9" fill="none" stroke="#00ff00" stroke-width="2" stroke-linejoin="miter"/>
<path d="M626 703.6V671.6M616.8 692.6L626 671.6L635.2 692.6" fill="none" stroke="#00ff00" stroke-width="2" stroke-linejoin="miter"/>
<path d="M703.3 634V602M694.1 623L703.3 602L712.5 623" fill="none" stroke="#00ff00" stroke-width="2" stroke-linejoin="miter"/>
<path d="M724.2 620.3V588.3M715 609.3L724.2 588.3L733.4 609.3" fill="none" stroke="#00ff00" stroke-width="2" stroke-linejoin="miter"/>
<path d="M388.6 546.3V514.3M382.6 527.8L388.6 514.3L394.6 527.8" fill="none" stroke="#00ff00" stroke-width="1" stroke-linejoin="miter"/>
<path d="M696.4 655.2V623.2M690.4 636.7L696.4 623.2L702.4 636.7" fill="none" stroke="#00ff00" stroke-width="1" stroke-linejoin="miter"/>
<path d="M423.5 742.8V716.8M417.5 730.3L423.5 716.8L429.5 730.3" fill="none" stroke="#808080" stroke-width="1" stroke-linejoin="miter"/>
<path d="M507.3 742.8V716.8M501.3 730.3L507.3 716.8L513.3 730.3" fill="none" stroke="#808080" stroke-width="1" stroke-linejoin="miter"/>
<path d="M647.4 741.2V715.2M641.4 728.7L647.4 715.2L653.4 728.7" fill="none" stroke="#808080" stroke-width="1" stroke-linejoin="miter"/>
<path d="M500.6 107.1V132.6M494.3 119.1L500.6 132.6L506.9 119.1" fill="none" stroke="#ff00ff" stroke-width="1"/>
<path d="M500.6 97V122.4M494.3 108.9L500.6 122.4L506.9 108.9" fill="none" stroke="#008080" stroke-width="1"/>
<path d="M563.6 99V124.5M557.3 111L563.6 124.5L569.9 111" fill="none" stroke="#ff00ff" stroke-width="1"/>
<path d="M584.5 99V124.5M578.2 111L584.5 124.5L590.8 111" fill="none" stroke="#008080" stroke-width="1"/>
<path d="M633.3 97.9V123.4M627 109.9L633.3 123.4L639.6 109.9" fill="none" stroke="#ff00ff" stroke-width="1"/>
<path d="M640.4 97.9V123.4M634.1 109.9L640.4 123.4L646.7 109.9" fill="none" stroke="#008080" stroke-width="1"/>
<path d="M696.3 99.4V124.9M690 111.4L696.3 124.9L702.6 111.4" fill="none" stroke="#008080" stroke-width="1"/>
<path d="M752.4 97.1V122.6M746.1 109.1L752.4 122.6L758.7 109.1" fill="none" stroke="#ff00ff" stroke-width="1"/>
<path d="M808.8 97.9V123.4M802.5 109.9L808.8 123.4L815 109.9" fill="none" stroke="#ff00ff" stroke-width="1"/>
<path d="M836.4 97.1V122.6M830.1 109.1L836.4 122.6L842.7 109.1" fill="none" stroke="#008080" stroke-width="1"/>
<path d="M899.3 100V125.5M893 112L899.3 125.5L905.6 112" fill="none" stroke="#008080" stroke-width="1"/>
<line x1="836" y1="205.5" x2="893" y2="205.5" stroke="#ff0000" stroke-width="1.3"/>
<line x1="836" y1="317.6" x2="893" y2="317.6" stroke="#ff0000" stroke-width="1.3"/>
<line x1="836" y1="430.2" x2="893" y2="430.2" stroke="#ff0000" stroke-width="1.3"/>
<line x1="836" y1="641" x2="893" y2="641" stroke="#ff0000" stroke-width="1.3"/>
</g>
<g clip-path="url(#cp)" font-family="'Liberation Sans',Arial,sans-serif" font-weight="bold" font-size="13.15" fill="#000"><text x="130.3" y="319.5" text-anchor="start" >Smaller T structure</text><text x="563.6" y="200.6" text-anchor="start" >DB Structure</text><text x="605" y="283" text-anchor="start" >New T structure</text><text x="529.7" y="314.3" text-anchor="start" >Small T</text><text x="704.6" y="375.3" text-anchor="start" >Small T</text><text x="312.5" y="605" text-anchor="start" >Small T</text><text x="75.3" y="232" text-anchor="start" >e</text><text x="864" y="199.8" text-anchor="middle" letter-spacing="-0.4">4412</text><text x="864" y="309.5" text-anchor="middle" letter-spacing="-0.4">4214</text><text x="864" y="422" text-anchor="middle" letter-spacing="-0.4">4016</text><text x="864" y="633" text-anchor="middle" letter-spacing="-0.4">3641</text><text x="941.5" y="139.7" text-anchor="start" >Next Echo and Pulse Highs</text><text x="941.5" y="203.9" text-anchor="start" >* S/T BUY SIGNAL *</text><text x="941.5" y="219.7" text-anchor="start" >* NO SHORT ALERT *</text><text x="941.5" y="251.4" text-anchor="start" >S/T BUY Signal at 3875 on 10 Nov</text><text x="941.5" y="283.9" text-anchor="start" >T volume Osc: positive on 17 Oct</text><text x="941.5" y="299.3" text-anchor="start" >Up</text><text x="941.5" y="331.4" text-anchor="start" >Osc: Buy Signal on 11 Nov</text><text x="941.5" y="347.3" text-anchor="start" >Down</text><text x="941.5" y="426.9" text-anchor="start" >Click here for</text><text x="941.5" y="443.2" text-anchor="start" >More Information...</text><text x="941.5" y="715" text-anchor="start" >Next Projected Low(s)</text></g>
<g font-family="'Liberation Sans',Arial,sans-serif" font-weight="bold" font-size="13.15" fill="#000"><text x="78.5" y="767.4" text-anchor="start" textLength="51.2">Osc 5,35</text><text x="759.7" y="891.5" text-anchor="start" >OSc Buy Signal</text></g>
<g clip-path="url(#cpo)" shape-rendering="crispEdges">
<path d="M80.5 829.6V854.1M87.5 829.6V859.6M94.5 829.6V861.1M101.5 829.6V856.9M108.5 829.6V849.9M115.5 829.6V844.2M122.5 829.6V841.4M129.5 829.6V844.2M136.5 829.6V848.4M143.5 829.6V850.6M150.5 829.6V849.9M157.5 829.6V845.6M164.5 829.6V837.2M171.5 829.6V823.6M178.5 829.6V816.9M185.5 829.6V809.6M192.5 829.6V806.3M199.5 829.6V803.6M206.5 829.6V799.2M213.5 829.6V792.2M220.5 829.6V785.2M227.5 829.6V777.3M234.5 829.6V772.6M241.5 829.6V769.1M248.5 829.6V771.1M255.5 829.6V772.6M262.5 829.6V775.3M269.5 829.6V774.8M276.5 829.6V775.3M283.5 829.6V772.6M290.5 829.6V769.1M297.5 829.6V761.8M304.5 829.6V761.3M311.5 829.6V761.8M318.5 829.6V766.3M325.5 829.6V773.9M332.5 829.6V786.6M339.5 829.6V795M346.5 829.6V802M353.5 829.6V809.1M360.5 829.6V816.9M367.5 829.6V824.6M374.5 829.6V834.4M381.5 829.6V848.4M388.5 829.6V856.9M395.5 829.6V864.6M402.5 829.6V867.6M409.5 829.6V868.6M416.5 829.6V863.9M423.5 829.6V858.3M430.5 829.6V854.1M437.5 829.6V855.5M444.5 829.6V856.9M451.5 829.6V865.3M458.5 829.6V875.2M465.5 829.6V875.2M472.5 829.6V882.2M479.5 829.6V887.8M486.5 829.6V893.4M493.5 829.6V899.1M500.5 829.6V905.3M507.5 829.6V910.9M514.5 829.6V912.6M521.5 829.6V911.6M528.5 829.6V908.9M535.5 829.6V899.6M542.5 829.6V892M549.5 829.6V882.2M556.5 829.6V875.2M563.5 829.6V872.4M570.5 829.6V876.6M577.5 829.6V882.2M584.5 829.6V886.4M591.5 829.6V885M598.5 829.6V882.2M605.5 829.6V869.6M612.5 829.6V862.6M619.5 829.6V854.6M626.5 829.6V849.9M633.5 829.6V842.3M640.5 829.6V836.6M647.5 829.6V827.3M654.5 829.6V818.9M661.5 829.6V810.6M668.5 829.6V803.6M675.5 829.6V800.6M682.5 829.6V801.2M689.5 829.6V804.8M696.5 829.6V809.1M703.5 829.6V813.3M710.5 829.6V816.1M717.5 829.6V818.1M724.5 829.6V809.1M731.5 829.6V800.1M738.5 829.6V792.2M745.5 829.6V786M752.5 829.6V779M759.5 829.6V780.1M766.5 829.6V782.9" stroke="#0000ff" stroke-width="1" fill="none"/>
<polyline points="81,811.9 167.4,811.9 168.8,813.3 206.8,812.4 227.9,807.7 250.4,802 272.9,797.8 295.4,792.2 317.9,788 333.3,786.6 346,788 365.7,793.6 642,793.6 659,797.8 684.4,797.8 701,800 715.3,801.5 737.8,801.5 751.9,799.2 766.5,797.3" fill="none" stroke="#000" stroke-width="1.1"/>
<polyline points="81,873.2 104,870.4 132.3,865.3 154.8,862.5 168.8,861.7 371.3,861.7 379.8,859 436,859.7 451,859 465,861 481.9,864.8 504.4,871 518.4,875.2 532.5,878 552,878.8 600,878.8 616.9,876.6 631,873.8 639.4,871.5 766.5,871.5" fill="none" stroke="#000" stroke-width="1.1"/>
<path d="M94.3 790.8V811.3M85 790.8L94.3 811.3L103.6 790.8" fill="none" stroke="#ff0000" stroke-width="2" stroke-linejoin="miter"/>
<path d="M143 790.8V811.3M133.7 790.8L143 811.3L152.3 790.8" fill="none" stroke="#ff0000" stroke-width="2" stroke-linejoin="miter"/>
<path d="M339 760.5V781M329.7 760.5L339 781L348.3 760.5" fill="none" stroke="#ff0000" stroke-width="2" stroke-linejoin="miter"/>
<path d="M451 790.8V811.3M441.7 790.8L451 811.3L460.3 790.8" fill="none" stroke="#ff0000" stroke-width="2" stroke-linejoin="miter"/>
<path d="M577 789.1V809.6M567.7 789.1L577 809.6L586.3 789.1" fill="none" stroke="#ff0000" stroke-width="2" stroke-linejoin="miter"/>
<path d="M702.7 775.1V795.6M693.4 775.1L702.7 795.6L712 775.1" fill="none" stroke="#ff0000" stroke-width="2" stroke-linejoin="miter"/>
<path d="M115.4 887.2V866.7M106.1 887.2L115.4 866.7L124.7 887.2" fill="none" stroke="#00ff00" stroke-width="2" stroke-linejoin="miter"/>
<path d="M164 870.3V849.8M154.7 870.3L164 849.8L173.3 870.3" fill="none" stroke="#00ff00" stroke-width="2" stroke-linejoin="miter"/>
<path d="M157 890.9V870.4M147.7 890.9L157 870.4L166.3 890.9" fill="none" stroke="#808080" stroke-width="2" stroke-linejoin="miter"/>
<path d="M422.8 903.3V882.8M413.5 903.3L422.8 882.8L432.1 903.3" fill="none" stroke="#00ff00" stroke-width="2" stroke-linejoin="miter"/>
<path d="M534.8 928V907.5M525.5 928L534.8 907.5L544.1 928" fill="none" stroke="#00ff00" stroke-width="2" stroke-linejoin="miter"/>
<path d="M605 908.9V888.4M595.7 908.9L605 888.4L614.3 908.9" fill="none" stroke="#00ff00" stroke-width="2" stroke-linejoin="miter"/>
<path d="M730.8 877.4V856.9M721.5 877.4L730.8 856.9L740.1 877.4" fill="none" stroke="#00ff00" stroke-width="2" stroke-linejoin="miter"/>
</g>
</svg>
</body></html>
